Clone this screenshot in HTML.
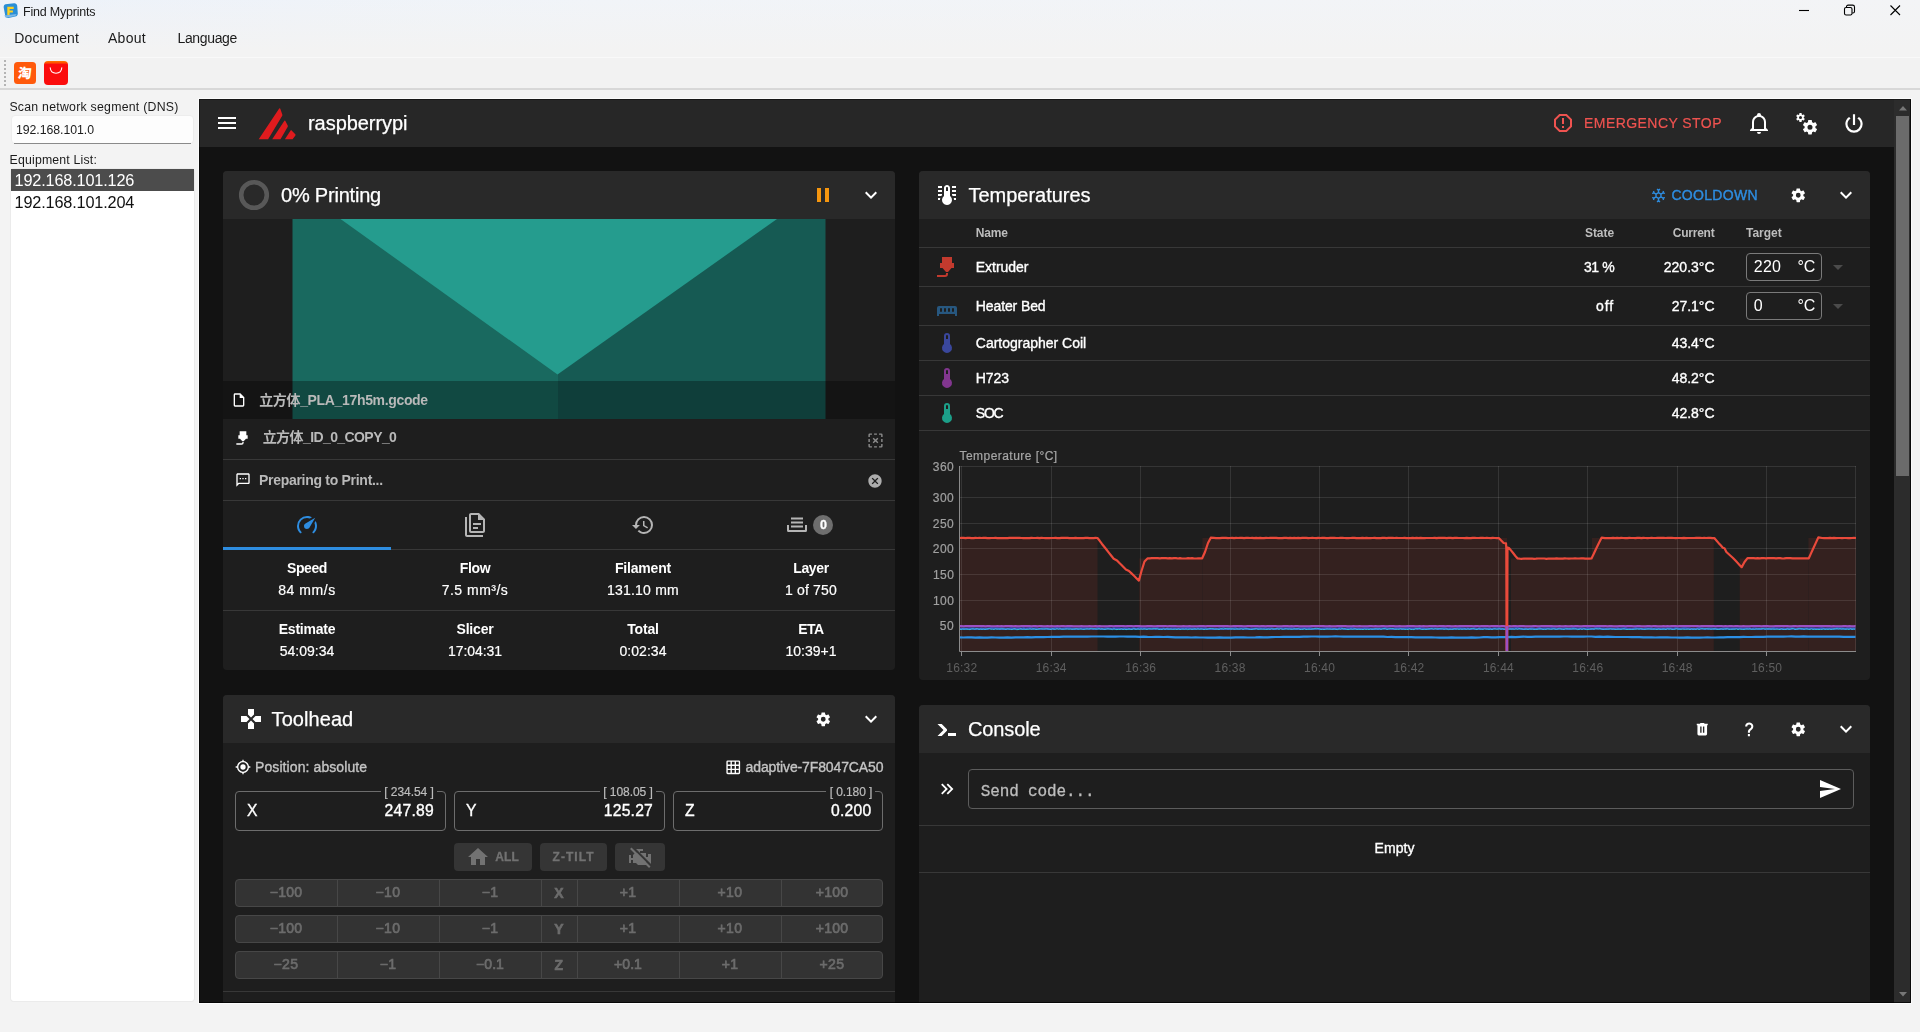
<!DOCTYPE html>
<html lang="en">
<head>
<meta charset="utf-8">
<title>Find Myprints</title>
<style>
*{box-sizing:border-box;margin:0;padding:0}
html,body{width:1920px;height:1032px;overflow:hidden;background:#f3f3f3}
body{position:relative;font-family:"Liberation Sans","Noto Sans CJK SC",sans-serif}
.a{position:absolute}
.t{position:absolute;white-space:pre}
svg{position:absolute;overflow:visible}
.titlebar{left:0;top:0;width:1920px;height:57px;background:linear-gradient(180deg,rgba(243,243,243,0) 0,#f3f3f3 50px),linear-gradient(90deg,#edf2f9 0,#f1f4f8 600px,#f3f4f6 1920px)}
.toolbar{left:0;top:57px;width:1920px;height:33px;background:#f2f2f2;border-top:1px solid #f9f9f9;border-bottom:2px solid #d8d8d8}
.app{left:199px;top:99px;width:1712px;height:904px;background:#121212;overflow:hidden;box-shadow:0 0 0 1px #fbfbfb}
.appbar{left:0;top:0;width:1695px;height:48px;background:#272727}
.panel{background:#1e1e1e;border-radius:4px;overflow:hidden}
.ph{left:0;top:0;width:100%;height:48px;background:#292929}
.hl{height:1px;background:#383838}
.btn{background:#353535;border-radius:4px}
.seg{background:#333;border:1px solid #474747;border-radius:4px;height:28px;left:12px;width:648px}
.seg i{position:absolute;top:0;width:1px;height:26px;background:#474747}
.box{border:1px solid #6d6d6d;border-radius:4px}
</style>
</head>
<body>
<!-- native window chrome -->
<div class="a titlebar"></div>
<div class="a toolbar"></div>
<svg style="left:3px;top:3px" width="15" height="16" viewBox="0 0 15 16"><path d="M2.5 1.2 11 .3c1.6-.2 3 .9 3.2 2.4l.6 7.8c.1 1.5-1 2.9-2.6 3.1l-6.800 1.300c-1.600.2-3-.9-3.200-2.400L.7 4.600C.6 3 1 1.400 2.500 1.200z" fill="#2a8fd6"/><path d="M1.300 12.500l1.500 2.300 9.500-1.800 1.400-2z" fill="#7db8e6"/><path d="M4.300 3.800h6.400v2.100H6.600v1.600h3.300v2H6.600v2.600H4.300z" fill="#ffd21e"/></svg>
<svg style="left:1798px;top:4px" width="104" height="12" viewBox="0 0 104 12" fill="none" stroke="#000" stroke-width="1.100"><path d="M1 6.500h10"/><rect x="46.500" y="3.500" width="7.500" height="7.500" rx="1.600"/><path d="M48.500 3.300v-.6c0-1 .7-1.600 1.600-1.600h4.500c1.200 0 1.900.8 1.900 1.900v4.400c0 .9-.6 1.600-1.600 1.600h-.7"/><path d="M92.500 1.500l9.500 9.500m0-9.500l-9.500 9.500"/></svg>
<div class="a" style="left:4px;top:60px;width:2px;height:27px;background:repeating-linear-gradient(180deg,#b4b4b4 0 2px,transparent 2px 4px)"></div>
<div class="a" style="left:14px;top:62px;width:22px;height:22px;border-radius:3.500px;background:#ff5a0c"></div>
<div class="t" style="left:18.200px;top:65.200px;font-size:13.500px;line-height:17px;color:#fff;font-weight:900;transform:skewX(-6deg)">淘</div>
<div class="a" style="left:44px;top:61px;width:24px;height:24px;border-radius:4px;background:linear-gradient(180deg,#ff7a00 0,#ff4a00 2px,#fb0c0c 3.500px)"></div>
<svg style="left:49px;top:67px" width="14" height="8" viewBox="0 0 14 8"><path d="M1.200.8c.3 3.300 2.700 5.400 5.800 5.400s5.500-2.100 5.800-5.400" fill="none" stroke="#fff" stroke-width="1.100" stroke-linecap="round"/></svg>
<!-- left pane -->
<div class="a" style="left:11px;top:115px;width:183px;height:28.500px;background:#fdfdfd;border-radius:4px;border:1px solid #ededed"></div>
<div class="a" style="left:13.500px;top:142.800px;width:177px;height:1.200px;background:#8a8a8a"></div>
<div class="a" style="left:11px;top:169px;width:183px;height:832px;background:#fff;border-radius:3px;box-shadow:0 0 0 1px #ebebeb"></div>
<div class="a" style="left:11px;top:169px;width:183px;height:22px;background:#4c4c4c"></div>

<!-- embedded dashboard -->
<div class="a app">
 <div class="a appbar"></div>
 <!-- scrollbar -->
 <div class="a" style="left:1695px;top:0;width:17px;height:904px;background:#2c2c2c"></div>
 <div class="a" style="left:1697px;top:17px;width:13px;height:360px;background:#6b6b6b"></div>
 <svg style="left:1699.500px;top:6.500px" width="8" height="4.500" viewBox="0 0 9 5"><path d="M0 5 4.500 0 9 5z" fill="#777"/></svg>
 <svg style="left:1699.500px;top:892.800px" width="8" height="4.500" viewBox="0 0 9 5"><path d="M0 0 4.500 5 9 0z" fill="#777"/></svg>
 <!-- appbar icons -->
 <svg style="left:16px;top:12px" width="24" height="24" viewBox="0 0 24 24" fill="#fff"><path d="M3,6H21V8H3V6M3,11H21V13H3V11M3,16H21V18H3V16Z"/></svg>
 <svg style="left:60px;top:9px" width="37" height="32" viewBox="0 0 37 32" fill="#df1b1e"><path d="M20.200.6q.6-1 1.100.2l2 5.600q.3.900-.2 1.700L9.100 31.200H-.3z"/><path d="M25.400 12.800q.5-.8 1 .1l2.300 4.500q.4.800-.1 1.600l-7.100 12.200h-8.300z"/><path d="M31.600 22.400q.5-.6 1 0l3.700 3.900q.5.600.1 1.200l-2.800 3.700h-7.700z"/></svg>
 <svg style="left:1352px;top:12px" width="24" height="24" viewBox="0 0 24 24" fill="#ef5350"><path d="M8.270,3L3,8.270V15.730L8.270,21H15.730C17.500,19.240 21,15.730 21,15.730V8.270L15.730,3M9.100,5H14.900L19,9.100V14.900L14.900,19H9.100L5,14.900V9.100M11,15H13V17H11V15M11,7H13V13H11V7"/></svg>
 <svg style="left:1548px;top:12px" width="24" height="24" viewBox="0 0 24 24" fill="#fff"><path d="M10,21H14A2,2 0 0,1 12,23A2,2 0 0,1 10,21M21,19V20H3V19L5,17V11C5,7.900 7.030,5.170 10,4.290C10,4.190 10,4.100 10,4A2,2 0 0,1 12,2A2,2 0 0,1 14,4C14,4.100 14,4.190 14,4.290C16.970,5.170 19,7.900 19,11V17L21,19M17,11A5,5 0 0,0 12,6A5,5 0 0,0 7,11V18H17V11Z"/></svg>
 <svg style="left:1596px;top:12px" width="24" height="24" viewBox="0 0 24 24" fill="#fff"><g transform="translate(6.360 7.560) scale(.72)"><path d="M12,15.500A3.500,3.500 0 0,1 8.500,12A3.500,3.500 0 0,1 12,8.500A3.500,3.500 0 0,1 15.500,12A3.500,3.500 0 0,1 12,15.500M19.430,12.970C19.470,12.650 19.500,12.330 19.500,12C19.500,11.670 19.470,11.340 19.430,11L21.540,9.370C21.730,9.220 21.780,8.950 21.660,8.730L19.660,5.270C19.540,5.050 19.270,4.960 19.050,5.050L16.560,6.050C16.040,5.660 15.500,5.320 14.870,5.070L14.500,2.420C14.460,2.180 14.250,2 14,2H10C9.750,2 9.540,2.180 9.500,2.420L9.130,5.070C8.500,5.320 7.960,5.660 7.440,6.050L4.950,5.050C4.730,4.960 4.460,5.050 4.340,5.270L2.340,8.730C2.210,8.950 2.270,9.220 2.460,9.370L4.570,11C4.530,11.340 4.500,11.670 4.500,12C4.500,12.330 4.530,12.650 4.570,12.970L2.460,14.630C2.270,14.780 2.210,15.050 2.340,15.270L4.340,18.730C4.460,18.950 4.730,19.030 4.950,18.950L7.440,17.940C7.960,18.340 8.500,18.680 9.130,18.930L9.500,21.580C9.540,21.820 9.750,22 10,22H14C14.250,22 14.460,21.820 14.500,21.580L14.870,18.930C15.500,18.670 16.040,18.340 16.560,17.940L19.050,18.950C19.270,19.030 19.540,18.950 19.660,18.730L21.660,15.270C21.780,15.050 21.730,14.780 21.540,14.630L19.430,12.970Z"/></g><g transform="translate(.220 1.220) scale(.44)"><path d="M12,15.500A3.500,3.500 0 0,1 8.500,12A3.500,3.500 0 0,1 12,8.500A3.500,3.500 0 0,1 15.500,12A3.500,3.500 0 0,1 12,15.500M19.430,12.970C19.470,12.650 19.500,12.330 19.500,12C19.500,11.670 19.470,11.340 19.430,11L21.540,9.370C21.730,9.220 21.780,8.950 21.660,8.730L19.660,5.270C19.540,5.050 19.270,4.960 19.050,5.050L16.560,6.050C16.040,5.660 15.500,5.320 14.870,5.070L14.500,2.420C14.460,2.180 14.250,2 14,2H10C9.750,2 9.540,2.180 9.500,2.420L9.130,5.070C8.500,5.320 7.960,5.660 7.440,6.050L4.950,5.050C4.730,4.960 4.460,5.050 4.340,5.270L2.340,8.730C2.210,8.950 2.270,9.220 2.460,9.370L4.570,11C4.530,11.340 4.500,11.670 4.500,12C4.500,12.330 4.530,12.650 4.570,12.970L2.460,14.630C2.270,14.780 2.210,15.050 2.340,15.270L4.340,18.730C4.460,18.950 4.730,19.030 4.950,18.950L7.440,17.940C7.960,18.340 8.500,18.680 9.130,18.930L9.500,21.580C9.540,21.820 9.750,22 10,22H14C14.250,22 14.460,21.820 14.500,21.580L14.870,18.930C15.500,18.670 16.040,18.340 16.560,17.940L19.050,18.950C19.270,19.030 19.540,18.950 19.660,18.730L21.660,15.270C21.780,15.050 21.730,14.780 21.540,14.630L19.430,12.970Z"/></g></svg>
 <svg style="left:1642px;top:11.500px" width="26" height="26" viewBox="0 0 24 24" fill="#fff"><path d="M16.560,5.440L15.110,6.890C16.840,7.940 18,9.830 18,12A6,6 0 0,1 12,18A6,6 0 0,1 6,12C6,9.830 7.160,7.940 8.880,6.880L7.440,5.440C5.360,6.880 4,9.280 4,12A8,8 0 0,0 12,20A8,8 0 0,0 20,12C20,9.280 18.640,6.880 16.560,5.440M13,3H11V13H13"/></svg>

 <!-- STATUS PANEL -->
 <div class="a panel" style="left:24px;top:72px;width:672px;height:499px">
  <div class="a ph"></div>
  <svg style="left:15px;top:8px" width="32" height="32" viewBox="0 0 32 32"><circle cx="16" cy="16" r="12.800" fill="none" stroke="#585858" stroke-width="4.600"/></svg>
  <svg style="left:588px;top:12px" width="24" height="24" viewBox="0 0 24 24" fill="#f5960f"><path d="M14,19H18V5H14M6,19H10V5H6V19Z"/></svg>
  <svg style="left:636px;top:12px" width="24" height="24" viewBox="0 0 24 24" fill="#fff"><path d="M7.410,8.580L12,13.170L16.590,8.580L18,10L12,16L6,10L7.410,8.580Z"/></svg>
  <!-- thumbnail -->
  <svg style="left:68px;top:48px;filter:blur(.6px)" width="536" height="200" viewBox="0 0 536 200"><rect x="1.500" width="267" height="200" fill="#19695f"/><rect x="267" width="267.500" height="200" fill="#165a53"/><path d="M49.500 0H486L266.500 155.500z" fill="#259c8e"/></svg>
  <div class="a" style="left:0;top:210px;width:672px;height:38px;background:rgba(0,0,0,.3)"></div>
  <svg style="left:8px;top:221px" width="16" height="16" viewBox="0 0 24 24" fill="#fff"><path d="M14,2H6A2,2 0 0,0 4,4V20A2,2 0 0,0 6,22H18A2,2 0 0,0 20,20V8L14,2M18,20H6V4H13V9H18V20Z"/></svg>
  <svg style="left:12px;top:259px" width="16" height="16" viewBox="0 0 24 24" fill="#fff"><path d="M7,2H17V8H19V13H16.500L13,17H11L7.500,13H5V8H7V2M10,22H2V20H10A1,1 0 0,0 11,19V18H13V19A3,3 0 0,1 10,22Z"/></svg>
  <svg style="left:643.500px;top:260.500px" width="17" height="17" viewBox="0 0 24 24" fill="#8c8c8c"><path d="M20,20V17H22V20A2,2 0 0,1 20,22H17V20H20M2,20V17H4V20H7V22H4A2,2 0 0,1 2,20M10,20H14V22H10V20M14.590,8L12,10.590L9.410,8L8,9.410L10.590,12L8,14.590L9.410,16L12,13.410L14.590,16L16,14.590L13.410,12L16,9.410L14.590,8M20,10H22V14H20V10M2,10H4V14H2V10M2,4A2,2 0 0,1 4,2H7V4H4V7H2V4M22,4V7H20V4H17V2H20A2,2 0 0,1 22,4M10,2H14V4H10V2Z"/></svg>
  <div class="a hl" style="left:0;top:288px;width:672px"></div>
  <svg style="left:12px;top:301px" width="16" height="16" viewBox="0 0 24 24" fill="#fff"><path d="M20 2H4C2.900 2 2 2.900 2 4V22L6 18H20C21.100 18 22 17.100 22 16V4C22 2.900 21.100 2 20 2M20 16H5.200L4 17.200V4H20V16M17 11H15V9H17M13 11H11V9H13M9 11H7V9H9Z"/></svg>
  <svg style="left:643.800px;top:302.200px" width="16" height="16" viewBox="0 0 24 24" fill="#adadad"><path d="M12,2C17.530,2 22,6.470 22,12C22,17.530 17.530,22 12,22C6.470,22 2,17.530 2,12C2,6.470 6.470,2 12,2M15.590,7L12,10.590L8.410,7L7,8.410L10.590,12L7,15.590L8.410,17L12,13.410L15.590,17L17,15.590L13.410,12L17,8.410L15.590,7Z"/></svg>
  <div class="a hl" style="left:0;top:329px;width:672px"></div>
  <!-- tabs -->
  <svg style="left:72px;top:342px" width="24" height="24" viewBox="0 0 24 24" fill="#2e8de0"><path d="M12,16A3,3 0 0,1 9,13C9,11.880 9.610,10.900 10.500,10.390L20.210,4.770L14.680,14.350C14.180,15.330 13.170,16 12,16M12,3C13.810,3 15.500,3.500 16.970,4.320L14.870,5.530C14,5.190 13,5 12,5A8,8 0 0,0 4,13C4,15.210 4.890,17.210 6.340,18.650H6.350C6.740,19.040 6.740,19.670 6.350,20.060C5.960,20.450 5.320,20.450 4.930,20.070V20.070C3.120,18.260 2,15.760 2,13A10,10 0 0,1 12,3M22,13C22,15.760 20.880,18.260 19.070,20.070V20.070C18.680,20.450 18.050,20.450 17.660,20.060C17.270,19.670 17.270,19.040 17.660,18.650V18.650C19.110,17.200 20,15.210 20,13C20,12 19.810,11 19.460,10.100L20.670,8C21.500,9.500 22,11.180 22,13Z"/></svg>
  <svg style="left:240px;top:342px" width="24" height="24" viewBox="0 0 24 24" fill="#b5b5b5"><path d="M16 0H8C6.900 0 6 .9 6 2V18C6 19.100 6.900 20 8 20H20C21.100 20 22 19.100 22 18V6L16 0M20 18H8V2H15V7H20V18M4 4V22H20V24H4C2.900 24 2 23.100 2 22V4H4M10 10V12H18V10H10M10 14V16H15V14H10Z"/></svg>
  <svg style="left:408px;top:342px" width="24" height="24" viewBox="0 0 24 24" fill="#b5b5b5"><path d="M13.500,8H12V13L16.280,15.540L17,14.330L13.500,12.250V8M13,3A9,9 0 0,0 4,12H1L4.960,16.030L9,12H6A7,7 0 0,1 13,5A7,7 0 0,1 20,12A7,7 0 0,1 13,19C11.070,19 9.320,18.210 8.060,16.940L6.640,18.360C8.270,20 10.500,21 13,21A9,9 0 0,0 22,12A9,9 0 0,0 13,3"/></svg>
  <svg style="left:562px;top:342px" width="24" height="24" viewBox="0 0 24 24" fill="#b5b5b5"><path d="M6,4.500H18V6.500H6M6,8.500H18V10.500H6M6,12.500H18V14.500H6M2,12H4V16.500Q4,17 4.500,17H19.500Q20,17 20,16.500V12H22V17.500Q22,19 20.500,19H3.500Q2,19 2,17.500Z"/></svg>
  <div class="a" style="left:589.800px;top:343.900px;width:20px;height:20px;border-radius:10px;background:#6e6e6e"></div>
  <div class="a hl" style="left:0;top:378px;width:672px"></div>
  <div class="a" style="left:0;top:376px;width:168px;height:2.500px;background:#2e8de0"></div>
  <div class="a hl" style="left:0;top:439px;width:672px"></div>
 </div>

 <!-- TOOLHEAD PANEL -->
 <div class="a panel" style="left:24px;top:596px;width:672px;height:340px;border-radius:4px 4px 0 0">
  <div class="a ph"></div>
  <svg style="left:16px;top:12px" width="24" height="24" viewBox="0 0 24 24" fill="#fff"><path d="M16.500,9L13.500,12L16.500,15H22V9M9,16.500V22H15V16.500L12,13.500M7.500,9H2V15H7.500L10.500,12M15,7.500V2H9V7.500L12,10.500L15,7.500Z"/></svg>
  <svg style="left:592px;top:16px" width="16.500" height="16.500" viewBox="0 0 24 24" fill="#fff"><path d="M12,15.500A3.500,3.500 0 0,1 8.500,12A3.500,3.500 0 0,1 12,8.500A3.500,3.500 0 0,1 15.500,12A3.500,3.500 0 0,1 12,15.500M19.430,12.970C19.470,12.650 19.500,12.330 19.500,12C19.500,11.670 19.470,11.340 19.430,11L21.540,9.370C21.730,9.220 21.780,8.950 21.660,8.730L19.660,5.270C19.540,5.050 19.270,4.960 19.050,5.050L16.560,6.050C16.040,5.660 15.500,5.320 14.870,5.070L14.500,2.420C14.460,2.180 14.250,2 14,2H10C9.750,2 9.540,2.180 9.500,2.420L9.130,5.070C8.500,5.320 7.960,5.660 7.440,6.050L4.950,5.050C4.730,4.960 4.460,5.050 4.340,5.270L2.340,8.730C2.210,8.950 2.270,9.220 2.460,9.370L4.570,11C4.530,11.340 4.500,11.670 4.500,12C4.500,12.330 4.530,12.650 4.570,12.970L2.460,14.630C2.270,14.780 2.210,15.050 2.340,15.270L4.340,18.730C4.460,18.950 4.730,19.030 4.950,18.950L7.440,17.940C7.960,18.340 8.500,18.680 9.130,18.930L9.500,21.580C9.540,21.820 9.750,22 10,22H14C14.250,22 14.460,21.820 14.500,21.580L14.870,18.930C15.500,18.670 16.040,18.340 16.560,17.940L19.050,18.950C19.270,19.030 19.540,18.950 19.660,18.730L21.660,15.270C21.780,15.050 21.730,14.780 21.540,14.630L19.430,12.970Z"/></svg>
  <svg style="left:636px;top:12px" width="24" height="24" viewBox="0 0 24 24" fill="#fff"><path d="M7.410,8.580L12,13.170L16.590,8.580L18,10L12,16L6,10L7.410,8.580Z"/></svg>
  <svg style="left:12px;top:64px" width="16" height="16" viewBox="0 0 24 24" fill="#fff"><path d="M12,8A4,4 0 0,1 16,12A4,4 0 0,1 12,16A4,4 0 0,1 8,12A4,4 0 0,1 12,8M3.050,13H1V11H3.050C3.500,6.830 6.830,3.500 11,3.050V1H13V3.050C17.170,3.500 20.500,6.830 20.950,11H23V13H20.950C20.500,17.170 17.170,20.500 13,20.950V23H11V20.950C6.830,20.500 3.500,17.170 3.050,13M12,5A7,7 0 0,0 5,12A7,7 0 0,0 12,19A7,7 0 0,0 19,12A7,7 0 0,0 12,5Z"/></svg>
  <svg style="left:502px;top:63.500px" width="16.500" height="16.500" viewBox="0 0 24 24" fill="#fff"><path d="M10,4V8H14V4H10M16,4V8H20V4H16M16,10V14H20V10H16M16,16V20H20V16H16M14,20V16H10V20H14M8,20V16H4V20H8M8,14V10H4V14H8M8,8V4H4V8H8M10,14H14V10H10V14M4,2H20A2,2 0 0,1 22,4V20A2,2 0 0,1 20,22H4C2.920,22 2,21.100 2,20V4A2,2 0 0,1 4,2Z"/></svg>
  <!-- position boxes -->
  <div class="a box" style="left:12px;top:96px;width:211px;height:40px"></div>
  <div class="a" style="left:158px;top:95px;width:56px;height:3px;background:#1e1e1e"></div>
  <div class="a box" style="left:231px;top:96px;width:211px;height:40px"></div>
  <div class="a" style="left:377px;top:95px;width:56px;height:3px;background:#1e1e1e"></div>
  <div class="a box" style="left:450px;top:96px;width:210px;height:40px"></div>
  <div class="a" style="left:603px;top:95px;width:49px;height:3px;background:#1e1e1e"></div>
  <!-- home buttons -->
  <div class="a btn" style="left:231px;top:148px;width:78px;height:28px"></div>
  <svg style="left:242.800px;top:150.200px" width="24" height="24" viewBox="0 0 24 24" fill="#727272"><path d="M10,20V14H14V20H19V12H22L12,3L2,12H5V20H10Z"/></svg>
  <div class="a btn" style="left:317px;top:148px;width:67px;height:28px"></div>
  <div class="a btn" style="left:392px;top:148px;width:50px;height:28px"></div>
  <svg style="left:405px;top:150px" width="24" height="24" viewBox="0 0 24 24" fill="#727272"><path d="M7,4V6H10V8H7L5,10V13H3V10H1V18H3V15H5V18H8L10,20H18V16H20V19H23V9H20V12H18V8H12V6H15V4H7Z"/><path d="M4.300 1.700 23.300 20.700" stroke="#353535" stroke-width="2.200" fill="none"/><path d="M2.800 3.200 21.800 22.200" stroke="#727272" stroke-width="2" fill="none"/></svg>
  <!-- move buttons -->
  <div class="a seg" style="top:184px"><i style="left:101px"></i><i style="left:203px"></i><i style="left:305px"></i><i style="left:341px"></i><i style="left:443px"></i><i style="left:545px"></i></div>
  <div class="a seg" style="top:220px"><i style="left:101px"></i><i style="left:203px"></i><i style="left:305px"></i><i style="left:341px"></i><i style="left:443px"></i><i style="left:545px"></i></div>
  <div class="a seg" style="top:256px"><i style="left:101px"></i><i style="left:203px"></i><i style="left:305px"></i><i style="left:341px"></i><i style="left:443px"></i><i style="left:545px"></i></div>
  <div class="a hl" style="left:0;top:296px;width:672px"></div>
 </div>

 <!-- TEMPERATURES PANEL -->
 <div class="a panel" style="left:720px;top:72px;width:951px;height:509px">
  <div class="a ph"></div>
  <svg style="left:16px;top:12px" width="24" height="24" viewBox="0 0 24 24" fill="#fff"><path d="M17 3H21V5H17V3M17 7H21V9H17V7M17 11H21V13H17.750L17 12.100V11M21 15V17H19C19 16.310 18.900 15.630 18.710 15H21M7 3V5H3V3H7M7 7V9H3V7H7M7 11V12.100L6.250 13H3V11H7M3 15H5.290C5.100 15.630 5 16.310 5 17H3V15M15 13V5C15 3.340 13.660 2 12 2S9 3.340 9 5V13C6.790 14.660 6.340 17.790 8 20S12.790 22.660 15 21 17.660 16.210 16 14C15.720 13.620 15.380 13.280 15 13M12 4C12.550 4 13 4.450 13 5V8H11V5C11 4.450 11.450 4 12 4Z"/></svg>
  <svg style="left:730.500px;top:15.500px" width="17" height="17" viewBox="0 0 24 24" fill="#2e8de0"><path d="M20.790,13.950L18.460,14.570L16.460,13.440V10.560L18.460,9.430L20.790,10.050L21.310,8.120L19.540,7.650L20,5.880L18.070,5.360L17.450,7.690L15.450,8.820L13,7.380V5.120L14.710,3.410L13.290,2L12,3.290L10.710,2L9.290,3.410L11,5.120V7.380L8.500,8.820L6.500,7.690L5.920,5.360L4,5.880L4.470,7.650L2.700,8.120L3.220,10.050L5.550,9.430L7.550,10.560V13.450L5.550,14.580L3.220,13.960L2.700,15.890L4.470,16.360L4,18.120L5.930,18.640L6.550,16.310L8.550,15.180L11,16.620V18.880L9.290,20.590L10.710,22L12,20.710L13.290,22L14.700,20.590L13,18.880V16.620L15.500,15.170L17.500,16.300L18.120,18.630L20,18.120L19.530,16.350L21.300,15.880L20.790,13.950M9.500,10.560L12,9.110L14.500,10.560V13.440L12,14.890L9.500,13.440V10.560Z"/></svg>
  <svg style="left:870.700px;top:15.800px" width="16.500" height="16.500" viewBox="0 0 24 24" fill="#fff"><path d="M12,15.500A3.500,3.500 0 0,1 8.500,12A3.500,3.500 0 0,1 12,8.500A3.500,3.500 0 0,1 15.500,12A3.500,3.500 0 0,1 12,15.500M19.430,12.970C19.470,12.650 19.500,12.330 19.500,12C19.500,11.670 19.470,11.340 19.430,11L21.540,9.370C21.730,9.220 21.780,8.950 21.660,8.730L19.660,5.270C19.540,5.050 19.270,4.960 19.050,5.050L16.560,6.050C16.040,5.660 15.500,5.320 14.870,5.070L14.500,2.420C14.460,2.180 14.250,2 14,2H10C9.750,2 9.540,2.180 9.500,2.420L9.130,5.070C8.500,5.320 7.960,5.660 7.440,6.050L4.950,5.050C4.730,4.960 4.460,5.050 4.340,5.270L2.340,8.730C2.210,8.950 2.270,9.220 2.460,9.370L4.570,11C4.530,11.340 4.500,11.670 4.500,12C4.500,12.330 4.530,12.650 4.570,12.970L2.460,14.630C2.270,14.780 2.210,15.050 2.340,15.270L4.340,18.730C4.460,18.950 4.730,19.030 4.950,18.950L7.440,17.940C7.960,18.340 8.500,18.680 9.130,18.930L9.500,21.580C9.540,21.820 9.750,22 10,22H14C14.250,22 14.460,21.820 14.500,21.580L14.870,18.930C15.500,18.670 16.040,18.340 16.560,17.940L19.050,18.950C19.270,19.030 19.540,18.950 19.660,18.730L21.660,15.270C21.780,15.050 21.730,14.780 21.540,14.630L19.430,12.970Z"/></svg>
  <svg style="left:915px;top:12px" width="24" height="24" viewBox="0 0 24 24" fill="#fff"><path d="M7.410,8.580L12,13.170L16.590,8.580L18,10L12,16L6,10L7.410,8.580Z"/></svg>
  <div class="a hl" style="left:0;top:76px;width:951px"></div>
  <div class="a hl" style="left:0;top:115px;width:951px"></div>
  <div class="a hl" style="left:0;top:154px;width:951px"></div>
  <div class="a hl" style="left:0;top:189px;width:951px"></div>
  <div class="a hl" style="left:0;top:224px;width:951px"></div>
  <div class="a hl" style="left:0;top:259px;width:951px"></div>
  <!-- sensor icons -->
  <svg style="left:16px;top:84px" width="24" height="24" viewBox="0 0 24 24" fill="#c23a2e"><path d="M7,2H17V8H19V13H16.500L13,17H11L7.500,13H5V8H7V2M10,22H2V20H10A1,1 0 0,0 11,19V18H13V19A3,3 0 0,1 10,22Z"/></svg>
  <svg style="left:16px;top:123px" width="24" height="24" viewBox="0 0 24 24" fill="#27577f"><path d="M2,22V14A2,2 0 0,1 4,12H20A2,2 0 0,1 22,14V22H20V20H4V22H2M6,14A1,1 0 0,0 5,15V17A1,1 0 0,0 6,18A1,1 0 0,0 7,17V15A1,1 0 0,0 6,14M10,14A1,1 0 0,0 9,15V17A1,1 0 0,0 10,18A1,1 0 0,0 11,17V15A1,1 0 0,0 10,14M14,14A1,1 0 0,0 13,15V17A1,1 0 0,0 14,18A1,1 0 0,0 15,17V15A1,1 0 0,0 14,14M18,14A1,1 0 0,0 17,15V17A1,1 0 0,0 18,18A1,1 0 0,0 19,17V15A1,1 0 0,0 18,14Z"/></svg>
  <svg style="left:16px;top:160px" width="24" height="24" viewBox="0 0 24 24" fill="#3a479c"><path d="M15 13V5A3 3 0 0 0 9 5V13A5 5 0 1 0 15 13M12 4A1 1 0 0 1 13 5V8H11V5A1 1 0 0 1 12 4Z"/></svg>
  <svg style="left:16px;top:195px" width="24" height="24" viewBox="0 0 24 24" fill="#82368f"><path d="M15 13V5A3 3 0 0 0 9 5V13A5 5 0 1 0 15 13M12 4A1 1 0 0 1 13 5V8H11V5A1 1 0 0 1 12 4Z"/></svg>
  <svg style="left:16px;top:230px" width="24" height="24" viewBox="0 0 24 24" fill="#1c9f89"><path d="M15 13V5A3 3 0 0 0 9 5V13A5 5 0 1 0 15 13M12 4A1 1 0 0 1 13 5V8H11V5A1 1 0 0 1 12 4Z"/></svg>
  <!-- target inputs -->
  <div class="a box" style="left:827px;top:82.200px;width:76px;height:27.600px;border-color:#7a7a7a"></div>
  <div class="a box" style="left:827px;top:121.200px;width:76px;height:27.600px;border-color:#7a7a7a"></div>
  <svg style="left:914px;top:94px" width="10" height="5" viewBox="0 0 10 5"><path d="M0 0h10L5 5z" fill="#4b4b4b"/></svg>
  <svg style="left:914px;top:133px" width="10" height="5" viewBox="0 0 10 5"><path d="M0 0h10L5 5z" fill="#4b4b4b"/></svg>
  <svg style="left:0;top:0" width="951" height="509" viewBox="0 0 951 509">
<rect x="40.5" y="366.9" width="138.0" height="113.1" fill="#34211f"/>
<rect x="220.2" y="387.5" width="63.3" height="92.5" fill="#34211f"/>
<rect x="283.5" y="366.9" width="304.5" height="113.1" fill="#34211f"/>
<rect x="592.0" y="387.5" width="81.0" height="92.5" fill="#34211f"/>
<rect x="673.0" y="366.9" width="121.8" height="113.1" fill="#34211f"/>
<rect x="820.7" y="387.5" width="68.8" height="92.5" fill="#34211f"/>
<rect x="889.5" y="366.9" width="47.5" height="113.1" fill="#34211f"/>
<path d="M40.5,295.5 H937.0 M40.5,326.5 H937.0 M40.5,352.5 H937.0 M40.5,377.5 H937.0 M40.5,403.5 H937.0 M40.5,429.5 H937.0 M40.5,454.5 H937.0 M42.5,295.0 V480.0 M132.5,295.0 V480.0 M221.5,295.0 V480.0 M311.5,295.0 V480.0 M400.5,295.0 V480.0 M489.5,295.0 V480.0 M579.5,295.0 V480.0 M668.5,295.0 V480.0 M758.5,295.0 V480.0 M847.5,295.0 V480.0 M936.5,295.0 V480.0" stroke="#ffffff" stroke-opacity=".105" stroke-width="1" fill="none"/>
<path d="M40.5,455.2 L42.5,455.1 L44.5,455.3 L46.5,455.1 L48.5,455.2 L50.5,455.2 L52.5,455.1 L54.5,455.2 L56.5,455.1 L58.5,455.2 L60.5,455.1 L62.5,455.1 L64.5,455.2 L66.5,455.3 L68.5,455.1 L70.5,455.1 L72.5,455.3 L74.5,455.4 L76.5,455.3 L78.5,455.2 L80.5,455.4 L82.5,455.1 L84.5,455.3 L86.5,455.2 L88.5,455.1 L90.5,455.1 L92.5,455.2 L94.5,455.3 L96.5,455.1 L98.5,455.3 L100.5,455.3 L102.5,455.2 L104.5,455.2 L106.5,455.1 L108.5,455.1 L110.5,455.1 L112.5,455.3 L114.5,455.2 L116.5,455.2 L118.5,455.3 L120.5,455.2 L122.5,455.2 L124.5,455.3 L126.5,455.3 L128.5,455.2 L130.5,455.3 L132.5,455.2 L134.5,455.3 L136.5,455.3 L138.5,455.2 L140.5,455.4 L142.5,455.1 L144.5,455.2 L146.5,455.3 L148.5,455.1 L150.5,455.2 L152.5,455.1 L154.5,455.3 L156.5,455.3 L158.5,455.3 L160.5,455.3 L162.5,455.2 L164.5,455.3 L166.5,455.3 L168.5,455.3 L170.5,455.2 L172.5,455.3 L174.5,455.4 L176.5,455.2 L178.5,455.3 L180.5,455.1 L182.5,455.3 L184.5,455.3 L186.5,455.4 L188.5,455.3 L190.5,455.2 L192.5,455.2 L194.5,455.3 L196.5,455.1 L198.5,455.2 L200.5,455.1 L202.5,455.1 L204.5,455.1 L206.5,455.3 L208.5,455.1 L210.5,455.2 L212.5,455.2 L214.5,455.3 L216.5,455.1 L218.5,455.2 L220.5,455.2 L222.5,455.3 L224.5,455.3 L226.5,455.3 L228.5,455.2 L230.5,455.2 L232.5,455.2 L234.5,455.3 L236.5,455.4 L238.5,455.1 L240.5,455.1 L242.5,455.2 L244.5,455.2 L246.5,455.2 L248.5,455.3 L250.5,455.2 L252.5,455.1 L254.5,455.2 L256.5,455.2 L258.5,455.3 L260.5,455.4 L262.5,455.3 L264.5,455.2 L266.5,455.3 L268.5,455.3 L270.5,455.1 L272.5,455.4 L274.5,455.3 L276.5,455.3 L278.5,455.3 L280.5,455.2 L282.5,455.2 L284.5,455.1 L286.5,455.3 L288.5,455.1 L290.5,455.1 L292.5,455.1 L294.5,455.1 L296.5,455.2 L298.5,455.1 L300.5,455.1 L302.5,455.1 L304.5,455.1 L306.5,455.2 L308.5,455.1 L310.5,455.3 L312.5,455.3 L314.5,455.1 L316.5,455.2 L318.5,455.2 L320.5,455.2 L322.5,455.1 L324.5,455.3 L326.5,455.4 L328.5,455.2 L330.5,455.2 L332.5,455.1 L334.5,455.1 L336.5,455.2 L338.5,455.2 L340.5,455.3 L342.5,455.1 L344.5,455.1 L346.5,455.4 L348.5,455.2 L350.5,455.1 L352.5,455.2 L354.5,455.1 L356.5,455.2 L358.5,455.4 L360.5,455.3 L362.5,455.3 L364.5,455.2 L366.5,455.2 L368.5,455.1 L370.5,455.3 L372.5,455.2 L374.5,455.3 L376.5,455.2 L378.5,455.1 L380.5,455.3 L382.5,455.4 L384.5,455.3 L386.5,455.3 L388.5,455.3 L390.5,455.3 L392.5,455.1 L394.5,455.2 L396.5,455.2 L398.5,455.1 L400.5,455.1 L402.5,455.2 L404.5,455.2 L406.5,455.3 L408.5,455.4 L410.5,455.2 L412.5,455.4 L414.5,455.4 L416.5,455.4 L418.5,455.2 L420.5,455.1 L422.5,455.1 L424.5,455.1 L426.5,455.1 L428.5,455.3 L430.5,455.4 L432.5,455.3 L434.5,455.2 L436.5,455.3 L438.5,455.3 L440.5,455.1 L442.5,455.3 L444.5,455.4 L446.5,455.3 L448.5,455.3 L450.5,455.2 L452.5,455.1 L454.5,455.3 L456.5,455.2 L458.5,455.3 L460.5,455.4 L462.5,455.2 L464.5,455.2 L466.5,455.4 L468.5,455.3 L470.5,455.1 L472.5,455.1 L474.5,455.1 L476.5,455.4 L478.5,455.3 L480.5,455.1 L482.5,455.3 L484.5,455.4 L486.5,455.3 L488.5,455.2 L490.5,455.2 L492.5,455.1 L494.5,455.1 L496.5,455.4 L498.5,455.3 L500.5,455.2 L502.5,455.4 L504.5,455.2 L506.5,455.3 L508.5,455.3 L510.5,455.1 L512.5,455.2 L514.5,455.2 L516.5,455.2 L518.5,455.3 L520.5,455.2 L522.5,455.2 L524.5,455.1 L526.5,455.4 L528.5,455.2 L530.5,455.2 L532.5,455.3 L534.5,455.4 L536.5,455.2 L538.5,455.4 L540.5,455.2 L542.5,455.2 L544.5,455.2 L546.5,455.1 L548.5,455.2 L550.5,455.1 L552.5,455.1 L554.5,455.3 L556.5,455.1 L558.5,455.2 L560.5,455.3 L562.5,455.2 L564.5,455.2 L566.5,455.2 L568.5,455.2 L570.5,455.3 L572.5,455.1 L574.5,455.2 L576.5,455.2 L578.5,455.2 L580.5,455.3 L582.5,455.2 L584.5,455.2 L586.5,455.3 L588.5,455.4 L590.5,455.2 L592.5,455.3 L594.5,455.2 L596.5,455.2 L598.5,455.3 L600.5,455.2 L602.5,455.2 L604.5,455.2 L606.5,455.4 L608.5,455.3 L610.5,455.3 L612.5,455.4 L614.5,455.2 L616.5,455.2 L618.5,455.4 L620.5,455.3 L622.5,455.1 L624.5,455.1 L626.5,455.2 L628.5,455.1 L630.5,455.2 L632.5,455.1 L634.5,455.3 L636.5,455.3 L638.5,455.3 L640.5,455.1 L642.5,455.3 L644.5,455.3 L646.5,455.1 L648.5,455.3 L650.5,455.4 L652.5,455.1 L654.5,455.4 L656.5,455.2 L658.5,455.2 L660.5,455.4 L662.5,455.3 L664.5,455.1 L666.5,455.2 L668.5,455.2 L670.5,455.2 L672.5,455.1 L674.5,455.2 L676.5,455.3 L678.5,455.1 L680.5,455.2 L682.5,455.2 L684.5,455.1 L686.5,455.2 L688.5,455.3 L690.5,455.2 L692.5,455.1 L694.5,455.4 L696.5,455.3 L698.5,455.4 L700.5,455.1 L702.5,455.2 L704.5,455.1 L706.5,455.3 L708.5,455.2 L710.5,455.1 L712.5,455.2 L714.5,455.4 L716.5,455.3 L718.5,455.2 L720.5,455.1 L722.5,455.4 L724.5,455.3 L726.5,455.3 L728.5,455.1 L730.5,455.1 L732.5,455.3 L734.5,455.2 L736.5,455.1 L738.5,455.4 L740.5,455.3 L742.5,455.3 L744.5,455.1 L746.5,455.3 L748.5,455.1 L750.5,455.3 L752.5,455.2 L754.5,455.2 L756.5,455.2 L758.5,455.4 L760.5,455.2 L762.5,455.1 L764.5,455.2 L766.5,455.2 L768.5,455.1 L770.5,455.1 L772.5,455.1 L774.5,455.1 L776.5,455.2 L778.5,455.2 L780.5,455.3 L782.5,455.2 L784.5,455.2 L786.5,455.1 L788.5,455.2 L790.5,455.1 L792.5,455.2 L794.5,455.1 L796.5,455.3 L798.5,455.2 L800.5,455.1 L802.5,455.2 L804.5,455.4 L806.5,455.1 L808.5,455.3 L810.5,455.2 L812.5,455.2 L814.5,455.3 L816.5,455.2 L818.5,455.2 L820.5,455.3 L822.5,455.4 L824.5,455.2 L826.5,455.3 L828.5,455.3 L830.5,455.3 L832.5,455.2 L834.5,455.2 L836.5,455.1 L838.5,455.1 L840.5,455.1 L842.5,455.3 L844.5,455.2 L846.5,455.1 L848.5,455.1 L850.5,455.3 L852.5,455.3 L854.5,455.3 L856.5,455.2 L858.5,455.2 L860.5,455.2 L862.5,455.2 L864.5,455.1 L866.5,455.2 L868.5,455.2 L870.5,455.4 L872.5,455.4 L874.5,455.2 L876.5,455.2 L878.5,455.4 L880.5,455.2 L882.5,455.2 L884.5,455.1 L886.5,455.2 L888.5,455.2 L890.5,455.2 L892.5,455.1 L894.5,455.2 L896.5,455.1 L898.5,455.2 L900.5,455.1 L902.5,455.2 L904.5,455.1 L906.5,455.1 L908.5,455.2 L910.5,455.2 L912.5,455.3 L914.5,455.2 L916.5,455.3 L918.5,455.3 L920.5,455.3 L922.5,455.3 L924.5,455.2 L926.5,455.2 L928.5,455.4 L930.5,455.1 L932.5,455.3 L934.5,455.3 L936.5,455.1" stroke="#9b4fc4" stroke-width="2.2" fill="none" stroke-linejoin="round" />
<path d="M40.5,457.9 L42.5,457.9 L44.5,457.8 L46.5,457.8 L48.5,457.9 L50.5,457.5 L52.5,457.7 L54.5,457.7 L56.5,457.9 L58.5,457.9 L60.5,457.9 L62.5,457.7 L64.5,457.9 L66.5,457.8 L68.5,457.8 L70.5,457.5 L72.5,457.4 L74.5,457.5 L76.5,457.6 L78.5,457.5 L80.5,457.9 L82.5,457.7 L84.5,457.8 L86.5,457.8 L88.5,457.8 L90.5,457.7 L92.5,457.4 L94.5,457.9 L96.5,457.8 L98.5,457.7 L100.5,457.7 L102.5,457.8 L104.5,457.4 L106.5,457.8 L108.5,457.5 L110.5,457.4 L112.5,457.6 L114.5,457.8 L116.5,457.5 L118.5,457.8 L120.5,458.0 L122.5,457.7 L124.5,457.6 L126.5,457.7 L128.5,457.8 L130.5,457.9 L132.5,457.8 L134.5,457.8 L136.5,457.4 L138.5,457.5 L140.5,457.5 L142.5,457.8 L144.5,457.6 L146.5,457.7 L148.5,457.4 L150.5,457.4 L152.5,457.6 L154.5,457.8 L156.5,457.8 L158.5,457.8 L160.5,457.6 L162.5,457.7 L164.5,457.7 L166.5,457.7 L168.5,457.5 L170.5,457.9 L172.5,457.5 L174.5,458.0 L176.5,458.0 L178.5,457.4 L180.5,457.7 L182.5,457.9 L184.5,458.0 L186.5,457.7 L188.5,457.6 L190.5,457.5 L192.5,458.0 L194.5,457.5 L196.5,457.7 L198.5,457.5 L200.5,457.7 L202.5,458.0 L204.5,457.5 L206.5,457.9 L208.5,457.7 L210.5,457.9 L212.5,457.8 L214.5,457.5 L216.5,457.9 L218.5,457.7 L220.5,457.4 L222.5,457.4 L224.5,457.7 L226.5,457.7 L228.5,457.6 L230.5,457.5 L232.5,457.6 L234.5,457.6 L236.5,457.9 L238.5,457.4 L240.5,457.8 L242.5,457.9 L244.5,457.5 L246.5,458.0 L248.5,457.8 L250.5,457.9 L252.5,457.6 L254.5,457.6 L256.5,457.6 L258.5,458.0 L260.5,457.8 L262.5,457.6 L264.5,457.7 L266.5,457.6 L268.5,457.4 L270.5,457.5 L272.5,457.9 L274.5,457.6 L276.5,458.0 L278.5,457.5 L280.5,457.6 L282.5,457.7 L284.5,457.5 L286.5,457.6 L288.5,458.0 L290.5,457.9 L292.5,457.9 L294.5,457.8 L296.5,457.9 L298.5,458.0 L300.5,457.7 L302.5,457.8 L304.5,457.4 L306.5,457.8 L308.5,457.7 L310.5,457.8 L312.5,457.8 L314.5,457.6 L316.5,457.4 L318.5,458.0 L320.5,457.5 L322.5,457.7 L324.5,457.6 L326.5,457.6 L328.5,457.8 L330.5,458.0 L332.5,457.6 L334.5,457.8 L336.5,457.6 L338.5,457.7 L340.5,457.6 L342.5,457.5 L344.5,457.5 L346.5,457.5 L348.5,457.9 L350.5,457.7 L352.5,457.5 L354.5,457.9 L356.5,458.0 L358.5,457.7 L360.5,457.5 L362.5,457.5 L364.5,457.5 L366.5,457.6 L368.5,457.5 L370.5,457.5 L372.5,457.6 L374.5,457.7 L376.5,457.9 L378.5,457.8 L380.5,457.6 L382.5,457.6 L384.5,457.7 L386.5,457.6 L388.5,457.6 L390.5,457.4 L392.5,457.6 L394.5,458.0 L396.5,457.5 L398.5,457.7 L400.5,457.8 L402.5,457.9 L404.5,457.5 L406.5,457.6 L408.5,457.5 L410.5,457.6 L412.5,457.7 L414.5,458.0 L416.5,457.9 L418.5,457.9 L420.5,457.4 L422.5,457.4 L424.5,457.8 L426.5,457.9 L428.5,457.7 L430.5,457.7 L432.5,457.4 L434.5,457.6 L436.5,458.0 L438.5,457.9 L440.5,457.9 L442.5,458.0 L444.5,457.5 L446.5,457.5 L448.5,457.5 L450.5,457.7 L452.5,457.8 L454.5,458.0 L456.5,457.8 L458.5,457.8 L460.5,457.9 L462.5,457.7 L464.5,457.7 L466.5,457.4 L468.5,457.9 L470.5,457.5 L472.5,457.9 L474.5,457.8 L476.5,457.6 L478.5,457.5 L480.5,457.5 L482.5,457.8 L484.5,457.8 L486.5,457.5 L488.5,457.4 L490.5,457.7 L492.5,457.7 L494.5,457.6 L496.5,457.5 L498.5,457.8 L500.5,457.4 L502.5,457.6 L504.5,457.7 L506.5,458.0 L508.5,457.8 L510.5,457.9 L512.5,457.7 L514.5,457.5 L516.5,457.5 L518.5,458.0 L520.5,457.8 L522.5,457.6 L524.5,457.4 L526.5,457.7 L528.5,457.8 L530.5,457.6 L532.5,457.6 L534.5,457.8 L536.5,458.0 L538.5,457.5 L540.5,457.4 L542.5,457.6 L544.5,457.6 L546.5,457.8 L548.5,457.5 L550.5,457.9 L552.5,457.8 L554.5,457.7 L556.5,457.5 L558.5,458.0 L560.5,457.6 L562.5,457.9 L564.5,457.5 L566.5,457.5 L568.5,457.9 L570.5,457.6 L572.5,458.0 L574.5,457.7 L576.5,457.5 L578.5,457.5 L580.5,457.6 L582.5,457.8 L584.5,458.0 L586.5,457.5 L588.5,457.6 L590.5,457.5 L592.5,458.0 L594.5,457.5 L596.5,457.4 L598.5,457.4 L600.5,457.6 L602.5,457.9 L604.5,457.9 L606.5,457.8 L608.5,458.0 L610.5,458.0 L612.5,457.6 L614.5,457.5 L616.5,458.0 L618.5,457.8 L620.5,457.4 L622.5,457.8 L624.5,457.6 L626.5,457.6 L628.5,457.6 L630.5,457.5 L632.5,457.4 L634.5,457.6 L636.5,457.6 L638.5,458.0 L640.5,457.5 L642.5,458.0 L644.5,457.5 L646.5,457.6 L648.5,457.9 L650.5,457.9 L652.5,457.7 L654.5,457.4 L656.5,457.7 L658.5,457.6 L660.5,457.9 L662.5,457.5 L664.5,457.6 L666.5,457.9 L668.5,457.4 L670.5,457.6 L672.5,457.9 L674.5,457.9 L676.5,457.4 L678.5,457.4 L680.5,457.4 L682.5,457.9 L684.5,457.6 L686.5,457.8 L688.5,457.9 L690.5,457.6 L692.5,457.6 L694.5,458.0 L696.5,457.8 L698.5,457.6 L700.5,457.8 L702.5,457.6 L704.5,457.6 L706.5,457.4 L708.5,457.9 L710.5,457.9 L712.5,457.8 L714.5,458.0 L716.5,457.4 L718.5,457.5 L720.5,457.7 L722.5,458.0 L724.5,458.0 L726.5,457.6 L728.5,457.5 L730.5,457.7 L732.5,457.7 L734.5,458.0 L736.5,457.5 L738.5,457.9 L740.5,457.8 L742.5,457.9 L744.5,457.9 L746.5,457.8 L748.5,457.6 L750.5,457.6 L752.5,457.6 L754.5,457.9 L756.5,457.4 L758.5,457.5 L760.5,457.8 L762.5,457.5 L764.5,457.4 L766.5,457.4 L768.5,457.7 L770.5,457.6 L772.5,458.0 L774.5,457.9 L776.5,458.0 L778.5,457.6 L780.5,457.4 L782.5,457.5 L784.5,457.7 L786.5,457.8 L788.5,457.7 L790.5,457.5 L792.5,457.6 L794.5,457.8 L796.5,457.8 L798.5,457.8 L800.5,457.9 L802.5,457.8 L804.5,457.5 L806.5,457.9 L808.5,457.6 L810.5,457.7 L812.5,457.6 L814.5,457.8 L816.5,457.5 L818.5,457.5 L820.5,457.5 L822.5,457.5 L824.5,457.9 L826.5,457.7 L828.5,457.6 L830.5,457.6 L832.5,458.0 L834.5,457.7 L836.5,457.5 L838.5,457.9 L840.5,457.8 L842.5,458.0 L844.5,457.5 L846.5,457.7 L848.5,457.9 L850.5,457.9 L852.5,457.9 L854.5,457.4 L856.5,457.6 L858.5,457.5 L860.5,457.5 L862.5,458.0 L864.5,457.7 L866.5,458.0 L868.5,457.6 L870.5,457.9 L872.5,457.7 L874.5,457.6 L876.5,457.9 L878.5,458.0 L880.5,457.5 L882.5,457.8 L884.5,457.8 L886.5,457.5 L888.5,457.6 L890.5,457.5 L892.5,457.5 L894.5,457.6 L896.5,457.8 L898.5,457.8 L900.5,457.5 L902.5,457.4 L904.5,457.6 L906.5,457.8 L908.5,457.5 L910.5,457.6 L912.5,457.5 L914.5,457.9 L916.5,457.7 L918.5,457.4 L920.5,457.5 L922.5,457.6 L924.5,457.7 L926.5,457.8 L928.5,457.5 L930.5,457.5 L932.5,457.8 L934.5,457.6 L936.5,457.6" stroke="#4257c9" stroke-width="2.2" fill="none" stroke-linejoin="round" />
<path d="M40.5,457.9 L42.0,458.6 L43.5,457.9 L45.0,458.2 L46.5,458.0 L48.0,458.0 L49.5,458.5 L51.0,458.6 L52.5,458.0 L54.0,457.8 L55.5,458.3 L57.0,457.8 L58.5,457.6 L60.0,458.5 L61.5,458.0 L63.0,458.4 L64.5,458.0 L66.0,458.5 L67.5,458.1 L69.0,457.8 L70.5,457.6 L72.0,458.2 L73.5,458.2 L75.0,458.5 L76.5,457.7 L78.0,458.2 L79.5,458.0 L81.0,458.1 L82.5,457.8 L84.0,457.9 L85.5,458.1 L87.0,458.5 L88.5,457.7 L90.0,458.1 L91.5,458.4 L93.0,458.6 L94.5,457.8 L96.0,457.7 L97.5,458.6 L99.0,458.6 L100.5,458.1 L102.0,457.7 L103.5,458.5 L105.0,458.0 L106.5,458.5 L108.0,458.2 L109.5,458.4 L111.0,457.8 L112.5,458.4 L114.0,457.8 L115.5,458.0 L117.0,458.5 L118.5,458.4 L120.0,457.8 L121.5,457.8 L123.0,458.0 L124.5,458.1 L126.0,458.0 L127.5,457.7 L129.0,457.9 L130.5,458.3 L132.0,458.5 L133.5,457.6 L135.0,458.2 L136.5,458.4 L138.0,457.6 L139.5,458.4 L141.0,457.7 L142.5,458.2 L144.0,458.2 L145.5,458.2 L147.0,457.9 L148.5,458.0 L150.0,458.2 L151.5,458.0 L153.0,458.3 L154.5,458.1 L156.0,458.0 L157.5,457.6 L159.0,458.2 L160.5,458.1 L162.0,457.8 L163.5,458.4 L165.0,458.4 L166.5,458.1 L168.0,457.8 L169.5,458.1 L171.0,457.7 L172.5,457.7 L174.0,458.0 L175.5,457.7 L177.0,458.1 L178.5,458.1 L180.0,457.6 L181.5,458.2 L183.0,457.7 L184.5,458.3 L186.0,458.4 L187.5,458.1 L189.0,457.7 L190.5,458.1 L192.0,458.0 L193.5,458.6 L195.0,457.7 L196.5,458.5 L198.0,458.6 L199.5,458.3 L201.0,458.4 L202.5,457.8 L204.0,458.6 L205.5,458.1 L207.0,458.6 L208.5,458.5 L210.0,457.8 L211.5,458.4 L213.0,458.5 L214.5,457.7 L216.0,458.0 L217.5,458.4 L219.0,457.8 L220.5,458.5 L222.0,457.9 L223.5,458.4 L225.0,457.8 L226.5,458.1 L228.0,458.5 L229.5,457.8 L231.0,457.9 L232.5,458.1 L234.0,457.9 L235.5,457.6 L237.0,457.8 L238.5,457.8 L240.0,458.5 L241.5,458.3 L243.0,458.5 L244.5,457.8 L246.0,458.4 L247.5,457.7 L249.0,458.1 L250.5,458.2 L252.0,458.0 L253.5,458.5 L255.0,458.2 L256.5,458.2 L258.0,458.5 L259.5,457.7 L261.0,458.6 L262.5,458.2 L264.0,458.0 L265.5,458.4 L267.0,457.9 L268.5,458.6 L270.0,458.2 L271.5,458.0 L273.0,458.4 L274.5,458.1 L276.0,457.8 L277.5,458.4 L279.0,457.7 L280.5,458.4 L282.0,457.9 L283.5,458.2 L285.0,458.6 L286.5,458.2 L288.0,458.3 L289.5,457.9 L291.0,457.6 L292.5,457.6 L294.0,457.8 L295.5,458.2 L297.0,458.0 L298.5,458.1 L300.0,458.5 L301.5,457.7 L303.0,457.8 L304.5,458.3 L306.0,457.6 L307.5,457.6 L309.0,458.0 L310.5,457.7 L312.0,458.0 L313.5,457.8 L315.0,458.2 L316.5,458.2 L318.0,457.8 L319.5,458.2 L321.0,458.1 L322.5,457.7 L324.0,458.5 L325.5,457.9 L327.0,457.8 L328.5,457.7 L330.0,458.2 L331.5,458.5 L333.0,458.4 L334.5,458.0 L336.0,457.9 L337.5,457.6 L339.0,458.3 L340.5,458.2 L342.0,458.0 L343.5,458.3 L345.0,458.1 L346.5,458.5 L348.0,458.3 L349.5,457.9 L351.0,458.5 L352.5,457.7 L354.0,458.1 L355.5,458.0 L357.0,457.8 L358.5,457.7 L360.0,458.4 L361.5,457.6 L363.0,458.2 L364.5,458.5 L366.0,457.8 L367.5,457.8 L369.0,458.2 L370.5,458.1 L372.0,458.2 L373.5,458.4 L375.0,457.8 L376.5,457.9 L378.0,457.9 L379.5,457.7 L381.0,458.5 L382.5,458.4 L384.0,458.3 L385.5,457.6 L387.0,458.5 L388.5,458.4 L390.0,458.1 L391.5,458.4 L393.0,458.1 L394.5,457.8 L396.0,457.7 L397.5,457.8 L399.0,457.6 L400.5,457.9 L402.0,458.4 L403.5,458.3 L405.0,458.5 L406.5,458.3 L408.0,457.9 L409.5,458.2 L411.0,458.0 L412.5,458.4 L414.0,458.1 L415.5,457.9 L417.0,458.3 L418.5,458.6 L420.0,457.8 L421.5,458.5 L423.0,457.6 L424.5,457.9 L426.0,457.8 L427.5,458.4 L429.0,458.6 L430.5,458.4 L432.0,457.9 L433.5,458.5 L435.0,457.9 L436.5,457.8 L438.0,458.5 L439.5,458.2 L441.0,458.3 L442.5,458.3 L444.0,458.6 L445.5,458.1 L447.0,458.4 L448.5,458.3 L450.0,458.5 L451.5,458.0 L453.0,458.3 L454.5,458.2 L456.0,457.9 L457.5,457.8 L459.0,458.2 L460.5,457.7 L462.0,458.5 L463.5,457.8 L465.0,457.6 L466.5,457.7 L468.0,458.5 L469.5,458.0 L471.0,457.8 L472.5,457.6 L474.0,457.6 L475.5,458.3 L477.0,458.2 L478.5,458.3 L480.0,458.3 L481.5,457.7 L483.0,458.2 L484.5,458.0 L486.0,458.4 L487.5,458.4 L489.0,458.5 L490.5,457.7 L492.0,458.5 L493.5,458.5 L495.0,458.6 L496.5,457.7 L498.0,457.8 L499.5,457.7 L501.0,457.6 L502.5,458.5 L504.0,458.4 L505.5,458.2 L507.0,458.4 L508.5,458.2 L510.0,457.9 L511.5,457.7 L513.0,457.7 L514.5,458.4 L516.0,457.8 L517.5,457.9 L519.0,458.0 L520.5,457.6 L522.0,457.9 L523.5,457.9 L525.0,458.3 L526.5,458.0 L528.0,457.9 L529.5,458.6 L531.0,458.1 L532.5,458.5 L534.0,458.2 L535.5,457.6 L537.0,458.0 L538.5,458.0 L540.0,458.4 L541.5,458.0 L543.0,458.3 L544.5,458.1 L546.0,457.8 L547.5,458.5 L549.0,457.7 L550.5,458.4 L552.0,457.8 L553.5,457.6 L555.0,457.8 L556.5,458.4 L558.0,458.6 L559.5,457.6 L561.0,458.1 L562.5,458.1 L564.0,458.4 L565.5,457.8 L567.0,458.1 L568.5,458.0 L570.0,458.4 L571.5,457.9 L573.0,458.6 L574.5,457.9 L576.0,457.8 L577.5,458.3 L579.0,458.1 L580.5,457.7 L582.0,458.2 L583.5,457.7 L585.0,458.4 L586.5,458.3 L588.0,458.4 L589.5,458.2 L591.0,458.0 L592.5,458.0 L594.0,458.0 L595.5,458.5 L597.0,457.7 L598.5,458.5 L600.0,457.6 L601.5,457.8 L603.0,457.9 L604.5,458.5 L606.0,458.1 L607.5,458.0 L609.0,458.5 L610.5,457.8 L612.0,458.1 L613.5,458.1 L615.0,458.4 L616.5,458.4 L618.0,458.3 L619.5,458.0 L621.0,457.9 L622.5,457.8 L624.0,458.5 L625.5,458.3 L627.0,458.4 L628.5,457.8 L630.0,458.0 L631.5,458.4 L633.0,458.2 L634.5,457.7 L636.0,458.1 L637.5,458.5 L639.0,457.8 L640.5,457.8 L642.0,457.9 L643.5,458.3 L645.0,458.5 L646.5,457.8 L648.0,457.8 L649.5,457.9 L651.0,457.9 L652.5,458.1 L654.0,457.8 L655.5,457.9 L657.0,457.8 L658.5,458.6 L660.0,458.3 L661.5,457.7 L663.0,458.6 L664.5,457.7 L666.0,458.0 L667.5,458.6 L669.0,458.4 L670.5,458.3 L672.0,458.0 L673.5,457.8 L675.0,458.2 L676.5,457.7 L678.0,457.8 L679.5,458.0 L681.0,457.6 L682.5,458.0 L684.0,458.4 L685.5,458.3 L687.0,458.1 L688.5,458.2 L690.0,458.1 L691.5,457.8 L693.0,458.2 L694.5,458.0 L696.0,458.3 L697.5,458.5 L699.0,458.0 L700.5,458.2 L702.0,458.4 L703.5,458.0 L705.0,457.8 L706.5,458.3 L708.0,458.5 L709.5,458.4 L711.0,458.3 L712.5,458.5 L714.0,458.3 L715.5,458.2 L717.0,458.1 L718.5,457.9 L720.0,458.2 L721.5,457.7 L723.0,458.0 L724.5,458.4 L726.0,458.3 L727.5,458.2 L729.0,457.9 L730.5,458.0 L732.0,458.1 L733.5,458.2 L735.0,458.0 L736.5,458.3 L738.0,458.5 L739.5,457.8 L741.0,458.3 L742.5,458.4 L744.0,458.0 L745.5,458.1 L747.0,458.6 L748.5,457.6 L750.0,458.2 L751.5,457.8 L753.0,458.4 L754.5,458.5 L756.0,458.1 L757.5,457.7 L759.0,458.2 L760.5,458.1 L762.0,458.3 L763.5,458.1 L765.0,458.2 L766.5,458.4 L768.0,458.1 L769.5,458.0 L771.0,458.6 L772.5,457.8 L774.0,458.3 L775.5,458.0 L777.0,458.4 L778.5,457.7 L780.0,458.6 L781.5,458.0 L783.0,457.7 L784.5,457.9 L786.0,458.0 L787.5,457.6 L789.0,458.0 L790.5,458.0 L792.0,458.3 L793.5,458.0 L795.0,457.9 L796.5,457.8 L798.0,458.3 L799.5,458.5 L801.0,458.1 L802.5,457.8 L804.0,458.4 L805.5,458.0 L807.0,457.8 L808.5,457.7 L810.0,458.4 L811.5,458.4 L813.0,458.2 L814.5,458.1 L816.0,458.2 L817.5,457.8 L819.0,458.6 L820.5,458.0 L822.0,458.2 L823.5,458.4 L825.0,458.4 L826.5,458.1 L828.0,457.9 L829.5,458.2 L831.0,457.7 L832.5,458.4 L834.0,458.0 L835.5,458.5 L837.0,457.9 L838.5,458.0 L840.0,457.9 L841.5,458.0 L843.0,457.8 L844.5,457.6 L846.0,458.3 L847.5,457.9 L849.0,457.9 L850.5,457.9 L852.0,458.1 L853.5,458.0 L855.0,458.2 L856.5,458.3 L858.0,458.0 L859.5,458.5 L861.0,458.5 L862.5,457.7 L864.0,458.4 L865.5,458.5 L867.0,458.4 L868.5,457.7 L870.0,458.4 L871.5,458.2 L873.0,457.6 L874.5,457.6 L876.0,458.6 L877.5,458.3 L879.0,457.9 L880.5,457.7 L882.0,457.8 L883.5,457.8 L885.0,458.4 L886.5,458.0 L888.0,457.8 L889.5,458.5 L891.0,458.4 L892.5,457.8 L894.0,458.5 L895.5,458.2 L897.0,458.4 L898.5,458.3 L900.0,458.5 L901.5,458.4 L903.0,458.4 L904.5,457.8 L906.0,458.3 L907.5,458.1 L909.0,458.4 L910.5,458.0 L912.0,458.5 L913.5,458.2 L915.0,457.9 L916.5,457.8 L918.0,457.7 L919.5,458.1 L921.0,457.7 L922.5,458.1 L924.0,457.8 L925.5,458.1 L927.0,458.1 L928.5,458.1 L930.0,458.5 L931.5,457.6 L933.0,458.4 L934.5,458.1 L936.0,458.2" stroke="#2cc3d6" stroke-width="1.0" fill="none" stroke-linejoin="round" />
<path d="M40.5,466.4 L44.5,466.5 L48.5,466.4 L52.5,466.4 L56.5,466.6 L60.5,466.4 L64.5,466.6 L68.5,466.6 L72.5,466.4 L76.5,466.5 L80.5,466.6 L84.5,466.6 L88.5,466.4 L92.5,466.6 L96.5,466.4 L100.5,466.3 L104.5,466.4 L108.5,466.1 L112.5,466.3 L116.5,466.2 L120.5,466.1 L124.5,466.2 L128.5,466.0 L132.5,465.9 L136.5,465.9 L140.5,465.9 L144.5,465.7 L148.5,465.7 L152.5,465.7 L156.5,465.7 L160.5,465.7 L164.5,465.5 L168.5,465.7 L172.5,465.5 L176.5,465.5 L180.5,465.5 L184.5,465.5 L188.5,465.7 L192.5,465.6 L196.5,465.6 L200.5,465.5 L204.5,465.5 L208.5,465.6 L212.5,465.7 L216.5,465.7 L220.5,465.8 L224.5,465.6 L228.5,465.9 L232.5,466.0 L236.5,465.9 L240.5,465.8 L244.5,466.0 L248.5,465.9 L252.5,466.1 L256.5,466.3 L260.5,466.3 L264.5,466.3 L268.5,466.4 L272.5,466.5 L276.5,466.4 L280.5,466.5 L284.5,466.5 L288.5,466.6 L292.5,466.5 L296.5,466.6 L300.5,466.4 L304.5,466.6 L308.5,466.5 L312.5,466.6 L316.5,466.4 L320.5,466.4 L324.5,466.3 L328.5,466.5 L332.5,466.5 L336.5,466.4 L340.5,466.2 L344.5,466.3 L348.5,466.3 L352.5,466.1 L356.5,466.0 L360.5,466.0 L364.5,465.9 L368.5,465.8 L372.5,465.8 L376.5,465.8 L380.5,465.9 L384.5,465.6 L388.5,465.7 L392.5,465.5 L396.5,465.5 L400.5,465.7 L404.5,465.6 L408.5,465.7 L412.5,465.5 L416.5,465.4 L420.5,465.5 L424.5,465.6 L428.5,465.7 L432.5,465.7 L436.5,465.6 L440.5,465.6 L444.5,465.5 L448.5,465.7 L452.5,465.6 L456.5,465.7 L460.5,465.7 L464.5,465.7 L468.5,466.0 L472.5,465.9 L476.5,466.2 L480.5,466.0 L484.5,466.2 L488.5,466.1 L492.5,466.1 L496.5,466.4 L500.5,466.3 L504.5,466.4 L508.5,466.3 L512.5,466.3 L516.5,466.5 L520.5,466.6 L524.5,466.6 L528.5,466.6 L532.5,466.4 L536.5,466.6 L540.5,466.6 L544.5,466.5 L548.5,466.6 L552.5,466.4 L556.5,466.6 L560.5,466.5 L564.5,466.2 L568.5,466.2 L572.5,466.3 L576.5,466.3 L580.5,466.1 L584.5,466.1 L588.5,466.1 L592.5,465.9 L596.5,466.1 L600.5,465.9 L604.5,465.7 L608.5,465.8 L612.5,465.8 L616.5,465.7 L620.5,465.7 L624.5,465.5 L628.5,465.7 L632.5,465.5 L636.5,465.6 L640.5,465.6 L644.5,465.5 L648.5,465.5 L652.5,465.6 L656.5,465.7 L660.5,465.6 L664.5,465.6 L668.5,465.5 L672.5,465.5 L676.5,465.8 L680.5,465.7 L684.5,465.8 L688.5,465.7 L692.5,465.8 L696.5,466.0 L700.5,466.0 L704.5,466.0 L708.5,466.0 L712.5,466.1 L716.5,466.2 L720.5,466.1 L724.5,466.3 L728.5,466.3 L732.5,466.4 L736.5,466.5 L740.5,466.3 L744.5,466.3 L748.5,466.4 L752.5,466.5 L756.5,466.5 L760.5,466.6 L764.5,466.6 L768.5,466.4 L772.5,466.6 L776.5,466.6 L780.5,466.6 L784.5,466.5 L788.5,466.4 L792.5,466.5 L796.5,466.5 L800.5,466.4 L804.5,466.4 L808.5,466.2 L812.5,466.1 L816.5,466.1 L820.5,466.2 L824.5,465.9 L828.5,466.0 L832.5,466.0 L836.5,465.8 L840.5,465.8 L844.5,465.8 L848.5,465.7 L852.5,465.6 L856.5,465.6 L860.5,465.7 L864.5,465.7 L868.5,465.5 L872.5,465.4 L876.5,465.6 L880.5,465.6 L884.5,465.4 L888.5,465.6 L892.5,465.7 L896.5,465.7 L900.5,465.6 L904.5,465.6 L908.5,465.7 L912.5,465.6 L916.5,465.6 L920.5,465.7 L924.5,465.9 L928.5,465.8 L932.5,465.9 L936.5,465.9" stroke="#2b90e6" stroke-width="2.2" fill="none" stroke-linejoin="round" />
<path d="M40.5,367.0 L42.5,366.8 L44.5,366.8 L46.5,367.2 L48.5,366.9 L50.5,366.8 L52.5,367.1 L54.5,367.1 L56.5,366.8 L58.5,367.0 L60.5,366.9 L62.5,367.0 L64.5,366.8 L66.5,366.8 L68.5,367.2 L70.5,367.2 L72.5,367.0 L74.5,367.0 L76.5,366.9 L78.5,367.1 L80.5,367.0 L82.5,367.2 L84.5,367.1 L86.5,367.1 L88.5,367.2 L90.5,366.9 L92.5,366.8 L94.5,366.9 L96.5,366.9 L98.5,366.8 L100.5,366.8 L102.5,367.0 L104.5,367.2 L106.5,367.0 L108.5,367.2 L110.5,367.2 L112.5,366.8 L114.5,367.0 L116.5,367.0 L118.5,366.8 L120.5,367.2 L122.5,366.9 L124.5,367.0 L126.5,367.1 L128.5,367.2 L130.5,367.1 L132.5,367.0 L134.5,367.0 L136.5,366.9 L138.5,367.2 L140.5,367.2 L142.5,366.9 L144.5,366.8 L146.5,366.9 L148.5,366.9 L150.5,367.2 L152.5,367.2 L154.5,367.1 L156.5,366.8 L158.5,367.1 L160.5,367.1 L162.5,367.1 L164.5,367.2 L166.5,366.8 L168.5,366.8 L170.5,367.1 L172.5,367.2 L174.5,367.1 L176.5,366.9 L178.5,367.0 L180.7,369.8 L182.8,372.7 L185.0,375.5 L187.4,378.5 L189.8,381.6 L192.3,384.7 L194.7,387.7 L198.0,389.5 L200.2,391.8 L202.5,394.0 L204.7,396.3 L206.9,398.6 L210.0,400.0 L212.5,402.4 L215.0,404.8 L217.4,407.2 L219.9,409.6 L222.5,400.0 L225.5,390.5 L228.7,387.3 L230.7,387.4 L232.7,387.1 L234.8,387.2 L236.8,387.2 L238.8,387.1 L240.8,387.3 L242.8,387.2 L244.8,387.2 L246.9,387.1 L248.9,387.4 L250.9,387.1 L252.9,387.4 L254.9,387.2 L257.0,387.1 L259.0,387.5 L261.0,387.2 L263.0,387.5 L265.0,387.5 L267.1,387.5 L269.1,387.1 L271.1,387.3 L273.1,387.1 L275.1,387.5 L277.1,387.5 L279.2,387.4 L281.2,387.3 L283.2,387.3 L286.0,381.0 L289.0,372.0 L291.8,366.7 L295.0,366.9 L297.0,367.1 L299.0,367.0 L301.0,367.1 L303.0,366.8 L305.0,366.9 L307.0,366.8 L309.0,367.1 L311.0,367.0 L313.1,366.8 L315.1,367.2 L317.1,366.9 L319.1,367.0 L321.1,366.8 L323.1,366.9 L325.1,367.1 L327.1,366.9 L329.1,366.9 L331.1,367.0 L333.1,366.9 L335.1,367.2 L337.1,366.8 L339.1,367.2 L341.1,366.8 L343.1,367.2 L345.1,367.1 L347.1,366.9 L349.2,367.0 L351.2,366.9 L353.2,366.9 L355.2,366.9 L357.2,366.9 L359.2,367.2 L361.2,367.2 L363.2,367.2 L365.2,366.8 L367.2,366.9 L369.2,367.2 L371.2,366.8 L373.2,367.1 L375.2,366.9 L377.2,367.2 L379.2,366.8 L381.2,367.1 L383.2,366.9 L385.3,366.8 L387.3,366.8 L389.3,367.1 L391.3,367.0 L393.3,366.9 L395.3,367.0 L397.3,367.2 L399.3,366.9 L401.3,367.0 L403.3,366.8 L405.3,366.9 L407.3,367.1 L409.3,367.1 L411.3,366.9 L413.3,366.8 L415.3,366.8 L417.3,367.0 L419.3,367.0 L421.4,366.9 L423.4,366.9 L425.4,367.0 L427.4,367.1 L429.4,367.1 L431.4,367.0 L433.4,366.9 L435.4,366.8 L437.4,367.1 L439.4,367.0 L441.4,367.1 L443.4,366.8 L445.4,367.1 L447.4,366.9 L449.4,367.2 L451.4,367.2 L453.4,367.0 L455.5,366.8 L457.5,367.2 L459.5,367.0 L461.5,367.2 L463.5,366.9 L465.5,366.9 L467.5,367.1 L469.5,366.9 L471.5,366.9 L473.5,366.9 L475.5,367.0 L477.5,366.8 L479.5,367.0 L481.5,367.0 L483.5,367.0 L485.5,366.8 L487.5,367.1 L489.5,367.1 L491.6,367.2 L493.6,366.9 L495.6,367.1 L497.6,366.9 L499.6,367.1 L501.6,366.8 L503.6,367.2 L505.6,367.2 L507.6,367.0 L509.6,367.0 L511.6,367.0 L513.6,367.0 L515.6,366.8 L517.6,367.2 L519.6,366.9 L521.6,366.9 L523.6,366.8 L525.6,366.9 L527.7,367.1 L529.7,366.8 L531.7,366.8 L533.7,367.1 L535.7,366.9 L537.7,366.8 L539.7,367.0 L541.7,367.0 L543.7,367.0 L545.7,367.1 L547.7,366.8 L549.7,367.2 L551.7,367.1 L553.7,366.8 L555.7,366.8 L557.7,367.0 L559.7,367.0 L561.7,366.9 L563.8,366.8 L565.8,367.0 L567.8,366.8 L569.8,367.0 L571.8,367.2 L573.8,366.8 L575.8,367.0 L577.8,367.1 L579.8,367.0 L582.2,369.5 L584.6,372.0 L587.0,372.3 L587.3,377.0 L587.6,480.0 L588.2,480.0 L588.5,376.5 L590.0,377.0 L592.2,379.6 L594.3,382.3 L596.4,385.0 L598.6,387.5 L600.7,387.7 L602.7,387.8 L604.8,387.5 L606.8,387.6 L608.9,387.7 L610.9,387.6 L613.0,387.5 L615.0,387.8 L617.1,387.7 L619.1,387.5 L621.2,387.5 L623.2,387.5 L625.3,387.5 L627.3,387.8 L629.4,387.7 L631.4,387.7 L633.5,387.7 L635.5,387.7 L637.6,387.4 L639.7,387.6 L641.7,387.7 L643.8,387.7 L645.8,387.4 L647.9,387.5 L649.9,387.6 L652.0,387.5 L654.0,387.5 L656.1,387.3 L658.1,387.5 L660.2,387.5 L662.2,387.3 L664.3,387.4 L666.3,387.7 L668.4,387.6 L670.4,387.7 L672.5,387.5 L674.8,382.8 L677.0,378.0 L679.8,372.3 L682.7,366.6 L686.0,367.1 L688.0,367.1 L690.0,367.2 L692.1,367.2 L694.1,366.8 L696.1,367.1 L698.1,366.9 L700.2,367.1 L702.2,366.9 L704.2,367.0 L706.2,367.2 L708.3,367.1 L710.3,366.9 L712.3,367.0 L714.3,367.0 L716.4,367.2 L718.4,366.9 L720.4,366.9 L722.4,367.1 L724.5,366.8 L726.5,367.0 L728.5,367.2 L730.5,367.0 L732.6,366.9 L734.6,367.0 L736.6,367.0 L738.6,366.8 L740.7,366.8 L742.7,366.8 L744.7,366.9 L746.7,367.0 L748.7,366.9 L750.8,366.9 L752.8,366.8 L754.8,367.0 L756.8,367.1 L758.9,367.0 L760.9,367.0 L762.9,367.1 L764.9,366.9 L767.0,367.1 L769.0,367.0 L771.0,367.0 L773.0,367.0 L775.1,367.0 L777.1,366.9 L779.1,366.9 L781.1,366.9 L783.2,367.0 L785.2,366.9 L787.2,367.0 L789.2,366.8 L791.3,366.9 L793.3,367.2 L795.3,367.0 L797.4,369.5 L799.5,371.9 L801.7,374.3 L803.8,376.8 L805.5,377.3 L807.4,381.0 L809.6,383.0 L811.8,385.0 L814.0,387.0 L816.2,389.3 L818.3,391.6 L820.5,393.9 L822.7,396.2 L825.5,391.0 L828.5,387.1 L830.5,387.2 L832.6,387.2 L834.6,387.1 L836.7,387.4 L838.7,387.1 L840.8,387.3 L842.8,387.1 L844.8,387.0 L846.9,387.4 L848.9,387.2 L851.0,387.0 L853.0,387.2 L855.1,387.2 L857.1,387.4 L859.2,387.1 L861.2,387.1 L863.2,387.5 L865.3,387.4 L867.3,387.1 L869.4,387.2 L871.4,387.2 L873.5,387.4 L875.5,387.3 L877.5,387.4 L879.6,387.4 L881.6,387.3 L883.7,387.4 L885.7,387.4 L887.8,387.4 L889.8,387.3 L891.9,382.6 L894.0,378.0 L896.7,372.1 L899.4,366.3 L903.0,367.0 L905.0,367.1 L907.0,367.1 L909.0,367.2 L911.0,366.8 L913.0,367.2 L915.0,366.8 L917.0,367.1 L919.0,367.0 L921.0,367.0 L923.0,367.2 L925.0,367.0 L927.0,367.0 L929.0,367.1 L931.0,367.2 L933.0,367.0 L935.0,366.9 L937.0,367.0" stroke="#ea4a3b" stroke-width="2.2" fill="none" stroke-linejoin="round" />
<rect x="586.6" y="455.0" width="2.600" height="25.0" fill="#9b4fc4"/>
<path d="M40.5,295.0 V480.5 M40.5,480.5 H937.0 M42.5,480.5 v4.5 M132.5,480.5 v4.5 M221.5,480.5 v4.5 M311.5,480.5 v4.5 M400.5,480.5 v4.5 M489.5,480.5 v4.5 M579.5,480.5 v4.5 M668.5,480.5 v4.5 M758.5,480.5 v4.5 M847.5,480.5 v4.5" stroke="#8c8c8c" stroke-width="1" fill="none"/>
</svg>
 </div>

 <!-- CONSOLE PANEL -->
 <div class="a panel" style="left:720px;top:606px;width:951px;height:330px;border-radius:4px 4px 0 0">
  <div class="a ph"></div>
  <svg style="left:16px;top:12px" width="24" height="24" viewBox="0 0 24 24" fill="#fff"><path d="M13,19V16H21V19H13M8.500,13L2.470,7H6.710L11.670,11.950C12.250,12.540 12.250,13.500 11.670,14.070L6.740,19H2.500L8.500,13Z"/></svg>
  <svg style="left:774.700px;top:15.800px" width="16.500" height="16.500" viewBox="0 0 24 24" fill="#fff"><path d="M9,3V4H4V6H5V19A2,2 0 0,0 7,21H17A2,2 0 0,0 19,19V6H20V4H15V3H9M9,8H11V17H9V8M13,8H15V17H13V8Z"/></svg>
  <svg style="left:822.400px;top:15.800px" width="16.500" height="16.500" viewBox="0 0 24 24" fill="#fff"><path d="M10,19H13V22H10V19M12,2C17.350,2.220 19.680,7.620 16.500,11.670C15.670,12.670 14.330,13.330 13.670,14.170C13,15 13,16 13,17H10C10,15.330 10,13.920 10.670,12.920C11.330,11.920 12.670,11.330 13.500,10.670C15.920,8.430 15.320,5.260 12,5A3,3 0 0,0 9,8H6A6,6 0 0,1 12,2Z"/></svg>
  <svg style="left:870.700px;top:15.800px" width="16.500" height="16.500" viewBox="0 0 24 24" fill="#fff"><path d="M12,15.500A3.500,3.500 0 0,1 8.500,12A3.500,3.500 0 0,1 12,8.500A3.500,3.500 0 0,1 15.500,12A3.500,3.500 0 0,1 12,15.500M19.430,12.970C19.470,12.650 19.500,12.330 19.500,12C19.500,11.670 19.470,11.340 19.430,11L21.540,9.370C21.730,9.220 21.780,8.950 21.660,8.730L19.660,5.270C19.540,5.050 19.270,4.960 19.050,5.050L16.560,6.050C16.040,5.660 15.500,5.320 14.870,5.070L14.500,2.420C14.460,2.180 14.250,2 14,2H10C9.750,2 9.540,2.180 9.500,2.420L9.130,5.070C8.500,5.320 7.960,5.660 7.440,6.050L4.950,5.050C4.730,4.960 4.460,5.050 4.340,5.270L2.340,8.730C2.210,8.950 2.270,9.220 2.460,9.370L4.570,11C4.530,11.340 4.500,11.670 4.500,12C4.500,12.330 4.530,12.650 4.570,12.970L2.460,14.630C2.270,14.780 2.210,15.050 2.340,15.270L4.340,18.730C4.460,18.950 4.730,19.030 4.950,18.950L7.440,17.940C7.960,18.340 8.500,18.680 9.130,18.930L9.500,21.580C9.540,21.820 9.750,22 10,22H14C14.250,22 14.460,21.820 14.500,21.580L14.870,18.930C15.500,18.670 16.040,18.340 16.560,17.940L19.050,18.950C19.270,19.030 19.540,18.950 19.660,18.730L21.660,15.270C21.780,15.050 21.730,14.780 21.540,14.630L19.430,12.970Z"/></svg>
  <svg style="left:915px;top:12px" width="24" height="24" viewBox="0 0 24 24" fill="#fff"><path d="M7.410,8.580L12,13.170L16.590,8.580L18,10L12,16L6,10L7.410,8.580Z"/></svg>
  <svg style="left:17px;top:73px" width="22" height="22" viewBox="0 0 24 24" fill="#fff"><path d="M5.590,7.410L7,6L13,12L7,18L5.590,16.590L10.170,12L5.590,7.410M11.590,7.410L13,6L19,12L13,18L11.590,16.590L16.170,12L11.590,7.410Z"/></svg>
  <div class="a box" style="left:49px;top:64px;width:886px;height:40px;border-color:#5c5c5c"></div>
  <svg style="left:899px;top:72px" width="24" height="24" viewBox="0 0 24 24" fill="#fff"><path d="M2,21L23,12L2,3V10L17,12L2,14V21Z"/></svg>
  <div class="a hl" style="left:0;top:120px;width:951px"></div>
  <div class="a hl" style="left:0;top:167px;width:951px"></div>
 </div>
 <div class="a" style="left:0;top:0;width:1712px;height:904px;border:1px solid rgba(0,0,0,.75);border-left-color:rgba(0,0,0,.4);border-top-color:rgba(0,0,0,.4)"></div>
</div>
<!-- text layer (page coordinates) -->
<div class="a" style="left:0;top:0;width:1920px;height:1032px;clip-path:inset(0 9px 29px 0);will-change:transform">
<div class="t" style="left:23.00px;top:6.32px;font-size:12.5px;line-height:12.5px;color:#1b1b1b;letter-spacing:-0.210px;">Find Myprints</div>
<div class="t" style="left:14.30px;top:31.15px;font-size:14px;line-height:14px;color:#1b1b1b;letter-spacing:0.111px;">Document</div>
<div class="t" style="left:108.00px;top:31.15px;font-size:14px;line-height:14px;color:#1b1b1b;letter-spacing:0.281px;">About</div>
<div class="t" style="left:177.50px;top:31.15px;font-size:14px;line-height:14px;color:#1b1b1b;letter-spacing:-0.350px;">Language</div>
<div class="t" style="left:9.40px;top:100.79px;font-size:12.3px;line-height:12.3px;color:#1b1b1b;letter-spacing:0.252px;">Scan network segment (DNS)</div>
<div class="t" style="left:16.00px;top:124.19px;font-size:12.3px;line-height:12.3px;color:#1b1b1b;letter-spacing:-0.049px;">192.168.101.0</div>
<div class="t" style="left:9.60px;top:154.09px;font-size:12.3px;line-height:12.3px;color:#1b1b1b;letter-spacing:0.176px;">Equipment List:</div>
<div class="t" style="left:14.60px;top:171.90px;font-size:16.3px;line-height:16.3px;color:#fff;letter-spacing:-0.176px;">192.168.101.126</div>
<div class="t" style="left:14.60px;top:193.80px;font-size:16.3px;line-height:16.3px;color:#111;letter-spacing:-0.176px;">192.168.101.204</div>
<div class="t" style="left:308.00px;top:113.07px;font-size:20px;line-height:20px;color:#fff;letter-spacing:-0.050px;-webkit-text-stroke:0.25px #fff;">raspberrypi</div>
<div class="t" style="left:1584.00px;top:116.35px;font-size:14px;line-height:14px;color:#ef5350;letter-spacing:0.446px;-webkit-text-stroke:0.2px #ef5350;">EMERGENCY STOP</div>
<div class="t" style="left:281.00px;top:184.87px;font-size:20px;line-height:20px;color:#fff;letter-spacing:-0.207px;-webkit-text-stroke:0.25px #fff;">0% Printing</div>
<div class="t" style="left:259.20px;top:392.85px;font-size:14px;line-height:14px;color:#b9b9b9;letter-spacing:-0.340px;font-weight:700;">立方体_PLA_17h5m.gcode</div>
<div class="t" style="left:262.70px;top:430.35px;font-size:14px;line-height:14px;color:#b9b9b9;letter-spacing:-0.587px;font-weight:700;">立方体_ID_0_COPY_0</div>
<div class="t" style="left:259.00px;top:473.45px;font-size:14px;line-height:14px;color:#b9b9b9;letter-spacing:-0.291px;font-weight:700;">Preparing to Print...</div>
<div class="t" style="left:287.00px;top:560.95px;font-size:14px;line-height:14px;color:#fff;letter-spacing:-0.403px;font-weight:700;">Speed</div>
<div class="t" style="left:278.25px;top:583.05px;font-size:14px;line-height:14px;color:#fff;letter-spacing:0.545px;-webkit-text-stroke:0.2px #fff;">84 mm/s</div>
<div class="t" style="left:459.75px;top:560.95px;font-size:14px;line-height:14px;color:#fff;letter-spacing:-0.348px;font-weight:700;">Flow</div>
<div class="t" style="left:441.75px;top:583.05px;font-size:14px;line-height:14px;color:#fff;letter-spacing:0.474px;-webkit-text-stroke:0.2px #fff;">7.5 mm³/s</div>
<div class="t" style="left:615.00px;top:560.95px;font-size:14px;line-height:14px;color:#fff;letter-spacing:-0.197px;font-weight:700;">Filament</div>
<div class="t" style="left:607.00px;top:583.05px;font-size:14px;line-height:14px;color:#fff;letter-spacing:0.217px;-webkit-text-stroke:0.2px #fff;">131.10 mm</div>
<div class="t" style="left:793.25px;top:560.95px;font-size:14px;line-height:14px;color:#fff;letter-spacing:-0.372px;font-weight:700;">Layer</div>
<div class="t" style="left:785.00px;top:583.05px;font-size:14px;line-height:14px;color:#fff;letter-spacing:0.174px;-webkit-text-stroke:0.2px #fff;">1 of 750</div>
<div class="t" style="left:278.75px;top:622.15px;font-size:14px;line-height:14px;color:#fff;letter-spacing:-0.232px;font-weight:700;">Estimate</div>
<div class="t" style="left:279.75px;top:644.25px;font-size:14px;line-height:14px;color:#fff;letter-spacing:0.000px;-webkit-text-stroke:0.2px #fff;">54:09:34</div>
<div class="t" style="left:456.50px;top:622.15px;font-size:14px;line-height:14px;color:#fff;letter-spacing:-0.190px;font-weight:700;">Slicer</div>
<div class="t" style="left:448.00px;top:644.25px;font-size:14px;line-height:14px;color:#fff;letter-spacing:-0.062px;-webkit-text-stroke:0.2px #fff;">17:04:31</div>
<div class="t" style="left:627.25px;top:622.15px;font-size:14px;line-height:14px;color:#fff;letter-spacing:-0.181px;font-weight:700;">Total</div>
<div class="t" style="left:619.50px;top:644.25px;font-size:14px;line-height:14px;color:#fff;letter-spacing:0.040px;-webkit-text-stroke:0.2px #fff;">0:02:34</div>
<div class="t" style="left:798.25px;top:622.15px;font-size:14px;line-height:14px;color:#fff;letter-spacing:-0.490px;font-weight:700;">ETA</div>
<div class="t" style="left:785.50px;top:644.25px;font-size:14px;line-height:14px;color:#fff;letter-spacing:0.000px;-webkit-text-stroke:0.2px #fff;">10:39+1</div>
<div class="t" style="left:819.90px;top:518.72px;font-size:12.5px;line-height:12.5px;color:#fff;letter-spacing:-0.150px;font-weight:700;-webkit-text-stroke:0.3px #fff;">0</div>
<div class="t" style="left:271.60px;top:709.07px;font-size:20px;line-height:20px;color:#fff;letter-spacing:0.064px;-webkit-text-stroke:0.25px #fff;">Toolhead</div>
<div class="t" style="left:255.00px;top:760.15px;font-size:14px;line-height:14px;color:#c4c4c4;letter-spacing:0.093px;-webkit-text-stroke:0.35px #c4c4c4;">Position: absolute</div>
<div class="t" style="left:745.60px;top:760.15px;font-size:14px;line-height:14px;color:#c4c4c4;letter-spacing:-0.122px;-webkit-text-stroke:0.35px #c4c4c4;">adaptive-7F8047CA50</div>
<div class="t" style="left:384.30px;top:786.24px;font-size:12px;line-height:12px;color:#bdbdbd;letter-spacing:-0.055px;-webkit-text-stroke:0.2px #bdbdbd;">[ 234.54 ]</div>
<div class="t" style="left:603.20px;top:786.24px;font-size:12px;line-height:12px;color:#bdbdbd;letter-spacing:-0.045px;-webkit-text-stroke:0.2px #bdbdbd;">[ 108.05 ]</div>
<div class="t" style="left:829.80px;top:786.24px;font-size:12px;line-height:12px;color:#bdbdbd;letter-spacing:-0.108px;-webkit-text-stroke:0.2px #bdbdbd;">[ 0.180 ]</div>
<div class="t" style="left:247.00px;top:803.11px;font-size:15.7px;line-height:15.7px;color:#fff;letter-spacing:0.131px;-webkit-text-stroke:0.35px #fff;">X</div>
<div class="t" style="left:466.00px;top:803.11px;font-size:15.7px;line-height:15.7px;color:#fff;letter-spacing:-0.069px;-webkit-text-stroke:0.35px #fff;">Y</div>
<div class="t" style="left:685.00px;top:803.11px;font-size:15.7px;line-height:15.7px;color:#fff;letter-spacing:0.006px;-webkit-text-stroke:0.35px #fff;">Z</div>
<div class="t" style="left:384.60px;top:803.11px;font-size:15.7px;line-height:15.7px;color:#fff;letter-spacing:0.236px;-webkit-text-stroke:0.35px #fff;">247.89</div>
<div class="t" style="left:603.80px;top:803.11px;font-size:15.7px;line-height:15.7px;color:#fff;letter-spacing:0.203px;-webkit-text-stroke:0.35px #fff;">125.27</div>
<div class="t" style="left:831.00px;top:803.11px;font-size:15.7px;line-height:15.7px;color:#fff;letter-spacing:0.267px;-webkit-text-stroke:0.35px #fff;">0.200</div>
<div class="t" style="left:495.30px;top:850.84px;font-size:12px;line-height:12px;color:#727272;letter-spacing:0.124px;font-weight:700;-webkit-text-stroke:0.3px #727272;">ALL</div>
<div class="t" style="left:552.60px;top:850.84px;font-size:12px;line-height:12px;color:#727272;letter-spacing:1.039px;font-weight:700;-webkit-text-stroke:0.3px #727272;">Z-TILT</div>
<div class="t" style="left:269.75px;top:885.35px;font-size:14px;line-height:14px;color:#6c6c6c;letter-spacing:0.238px;-webkit-text-stroke:0.65px #6c6c6c;">−100</div>
<div class="t" style="left:375.50px;top:885.35px;font-size:14px;line-height:14px;color:#6c6c6c;letter-spacing:0.417px;-webkit-text-stroke:0.65px #6c6c6c;">−10</div>
<div class="t" style="left:481.75px;top:885.35px;font-size:14px;line-height:14px;color:#6c6c6c;letter-spacing:0.266px;-webkit-text-stroke:0.65px #6c6c6c;">−1</div>
<div class="t" style="left:554.25px;top:885.85px;font-size:14px;line-height:14px;color:#6c6c6c;letter-spacing:0.156px;font-weight:700;-webkit-text-stroke:0.6px #6c6c6c;">X</div>
<div class="t" style="left:619.75px;top:885.35px;font-size:14px;line-height:14px;color:#6c6c6c;letter-spacing:0.266px;-webkit-text-stroke:0.65px #6c6c6c;">+1</div>
<div class="t" style="left:717.50px;top:885.35px;font-size:14px;line-height:14px;color:#6c6c6c;letter-spacing:0.417px;-webkit-text-stroke:0.65px #6c6c6c;">+10</div>
<div class="t" style="left:815.75px;top:885.35px;font-size:14px;line-height:14px;color:#6c6c6c;letter-spacing:0.238px;-webkit-text-stroke:0.65px #6c6c6c;">+100</div>
<div class="t" style="left:269.75px;top:921.35px;font-size:14px;line-height:14px;color:#6c6c6c;letter-spacing:0.238px;-webkit-text-stroke:0.65px #6c6c6c;">−100</div>
<div class="t" style="left:375.50px;top:921.35px;font-size:14px;line-height:14px;color:#6c6c6c;letter-spacing:0.417px;-webkit-text-stroke:0.65px #6c6c6c;">−10</div>
<div class="t" style="left:481.75px;top:921.35px;font-size:14px;line-height:14px;color:#6c6c6c;letter-spacing:0.266px;-webkit-text-stroke:0.65px #6c6c6c;">−1</div>
<div class="t" style="left:554.25px;top:921.85px;font-size:14px;line-height:14px;color:#6c6c6c;letter-spacing:0.156px;font-weight:700;-webkit-text-stroke:0.6px #6c6c6c;">Y</div>
<div class="t" style="left:619.75px;top:921.35px;font-size:14px;line-height:14px;color:#6c6c6c;letter-spacing:0.266px;-webkit-text-stroke:0.65px #6c6c6c;">+1</div>
<div class="t" style="left:717.50px;top:921.35px;font-size:14px;line-height:14px;color:#6c6c6c;letter-spacing:0.417px;-webkit-text-stroke:0.65px #6c6c6c;">+10</div>
<div class="t" style="left:815.75px;top:921.35px;font-size:14px;line-height:14px;color:#6c6c6c;letter-spacing:0.238px;-webkit-text-stroke:0.65px #6c6c6c;">+100</div>
<div class="t" style="left:273.50px;top:957.35px;font-size:14px;line-height:14px;color:#6c6c6c;letter-spacing:0.417px;-webkit-text-stroke:0.65px #6c6c6c;">−25</div>
<div class="t" style="left:379.75px;top:957.35px;font-size:14px;line-height:14px;color:#6c6c6c;letter-spacing:0.266px;-webkit-text-stroke:0.65px #6c6c6c;">−1</div>
<div class="t" style="left:476.00px;top:957.35px;font-size:14px;line-height:14px;color:#6c6c6c;letter-spacing:0.090px;-webkit-text-stroke:0.65px #6c6c6c;">−0.1</div>
<div class="t" style="left:554.50px;top:957.85px;font-size:14px;line-height:14px;color:#6c6c6c;letter-spacing:0.438px;font-weight:700;-webkit-text-stroke:0.6px #6c6c6c;">Z</div>
<div class="t" style="left:614.00px;top:957.35px;font-size:14px;line-height:14px;color:#6c6c6c;letter-spacing:0.090px;-webkit-text-stroke:0.65px #6c6c6c;">+0.1</div>
<div class="t" style="left:721.75px;top:957.35px;font-size:14px;line-height:14px;color:#6c6c6c;letter-spacing:0.266px;-webkit-text-stroke:0.65px #6c6c6c;">+1</div>
<div class="t" style="left:819.50px;top:957.35px;font-size:14px;line-height:14px;color:#6c6c6c;letter-spacing:0.417px;-webkit-text-stroke:0.65px #6c6c6c;">+25</div>
<div class="t" style="left:968.40px;top:184.97px;font-size:20px;line-height:20px;color:#fff;letter-spacing:-0.007px;-webkit-text-stroke:0.25px #fff;">Temperatures</div>
<div class="t" style="left:1671.40px;top:188.15px;font-size:14px;line-height:14px;color:#2e8de0;letter-spacing:0.325px;-webkit-text-stroke:0.4px #2e8de0;">COOLDOWN</div>
<div class="t" style="left:975.80px;top:226.74px;font-size:12px;line-height:12px;color:#bdbdbd;letter-spacing:-0.222px;font-weight:700;">Name</div>
<div class="t" style="left:1584.90px;top:226.74px;font-size:12px;line-height:12px;color:#bdbdbd;letter-spacing:-0.009px;font-weight:700;">State</div>
<div class="t" style="left:1672.70px;top:226.74px;font-size:12px;line-height:12px;color:#bdbdbd;letter-spacing:-0.221px;font-weight:700;">Current</div>
<div class="t" style="left:1746.00px;top:226.74px;font-size:12px;line-height:12px;color:#bdbdbd;letter-spacing:-0.016px;font-weight:700;">Target</div>
<div class="t" style="left:975.80px;top:260.05px;font-size:14px;line-height:14px;color:#fff;letter-spacing:-0.040px;-webkit-text-stroke:0.35px #fff;">Extruder</div>
<div class="t" style="left:975.80px;top:299.05px;font-size:14px;line-height:14px;color:#fff;letter-spacing:-0.113px;-webkit-text-stroke:0.35px #fff;">Heater Bed</div>
<div class="t" style="left:975.80px;top:336.35px;font-size:14px;line-height:14px;color:#fff;letter-spacing:-0.006px;-webkit-text-stroke:0.35px #fff;">Cartographer Coil</div>
<div class="t" style="left:975.80px;top:371.35px;font-size:14px;line-height:14px;color:#fff;letter-spacing:-0.067px;-webkit-text-stroke:0.35px #fff;">H723</div>
<div class="t" style="left:975.80px;top:406.35px;font-size:14px;line-height:14px;color:#fff;letter-spacing:-1.215px;-webkit-text-stroke:0.35px #fff;">SOC</div>
<div class="t" style="left:1584.00px;top:260.05px;font-size:14px;line-height:14px;color:#fff;letter-spacing:-0.430px;-webkit-text-stroke:0.35px #fff;">31 %</div>
<div class="t" style="left:1596.00px;top:299.05px;font-size:14px;line-height:14px;color:#fff;letter-spacing:0.963px;-webkit-text-stroke:0.35px #fff;">off</div>
<div class="t" style="left:1663.80px;top:260.05px;font-size:14px;line-height:14px;color:#fff;letter-spacing:-0.007px;-webkit-text-stroke:0.35px #fff;">220.3°C</div>
<div class="t" style="left:1671.80px;top:299.05px;font-size:14px;line-height:14px;color:#fff;letter-spacing:-0.045px;-webkit-text-stroke:0.35px #fff;">27.1°C</div>
<div class="t" style="left:1671.80px;top:336.35px;font-size:14px;line-height:14px;color:#fff;letter-spacing:-0.045px;-webkit-text-stroke:0.35px #fff;">43.4°C</div>
<div class="t" style="left:1671.80px;top:371.35px;font-size:14px;line-height:14px;color:#fff;letter-spacing:-0.045px;-webkit-text-stroke:0.35px #fff;">48.2°C</div>
<div class="t" style="left:1671.80px;top:406.35px;font-size:14px;line-height:14px;color:#fff;letter-spacing:-0.045px;-webkit-text-stroke:0.35px #fff;">42.8°C</div>
<div class="t" style="left:1753.80px;top:259.16px;font-size:16px;line-height:16px;color:#fff;letter-spacing:0.232px;">220</div>
<div class="t" style="left:1797.50px;top:259.16px;font-size:16px;line-height:16px;color:#fff;letter-spacing:-0.227px;">°C</div>
<div class="t" style="left:1753.80px;top:298.16px;font-size:16px;line-height:16px;color:#fff;letter-spacing:0.294px;">0</div>
<div class="t" style="left:1797.50px;top:298.16px;font-size:16px;line-height:16px;color:#fff;letter-spacing:-0.227px;">°C</div>
<div class="t" style="left:967.90px;top:719.07px;font-size:20px;line-height:20px;color:#fff;letter-spacing:-0.113px;-webkit-text-stroke:0.25px #fff;">Console</div>
<div class="t" style="left:980.70px;top:784.10px;font-size:16px;line-height:16px;color:#bdbdbd;letter-spacing:-0.118px;font-family:'Liberation Mono', monospace;-webkit-text-stroke:0.3px #bdbdbd;">Send code...</div>
<div class="t" style="left:1374.60px;top:841.35px;font-size:14px;line-height:14px;color:#fff;letter-spacing:0.062px;-webkit-text-stroke:0.35px #fff;">Empty</div>
<div class="t" style="left:959.50px;top:450.04px;font-size:12px;line-height:12px;color:#a6a6a6;letter-spacing:0.454px;-webkit-text-stroke:0.2px #a6a6a6;">Temperature [°C]</div>
<div class="t" style="left:932.80px;top:461.14px;font-size:12px;line-height:12px;color:#a0a0a0;letter-spacing:0.456px;-webkit-text-stroke:0.2px #a0a0a0;">360</div>
<div class="t" style="left:932.80px;top:491.98px;font-size:12px;line-height:12px;color:#a0a0a0;letter-spacing:0.456px;-webkit-text-stroke:0.2px #a0a0a0;">300</div>
<div class="t" style="left:932.80px;top:517.67px;font-size:12px;line-height:12px;color:#a0a0a0;letter-spacing:0.456px;-webkit-text-stroke:0.2px #a0a0a0;">250</div>
<div class="t" style="left:932.80px;top:543.36px;font-size:12px;line-height:12px;color:#a0a0a0;letter-spacing:0.456px;-webkit-text-stroke:0.2px #a0a0a0;">200</div>
<div class="t" style="left:933.00px;top:569.06px;font-size:12px;line-height:12px;color:#a0a0a0;letter-spacing:0.390px;-webkit-text-stroke:0.2px #a0a0a0;">150</div>
<div class="t" style="left:933.00px;top:594.75px;font-size:12px;line-height:12px;color:#a0a0a0;letter-spacing:0.390px;-webkit-text-stroke:0.2px #a0a0a0;">100</div>
<div class="t" style="left:939.80px;top:620.45px;font-size:12px;line-height:12px;color:#a0a0a0;letter-spacing:0.520px;-webkit-text-stroke:0.2px #a0a0a0;">50</div>
<div class="t" style="left:946.30px;top:661.84px;font-size:12px;line-height:12px;color:#5f5f5f;letter-spacing:0.194px;">16:32</div>
<div class="t" style="left:1035.73px;top:661.84px;font-size:12px;line-height:12px;color:#5f5f5f;letter-spacing:0.194px;">16:34</div>
<div class="t" style="left:1125.16px;top:661.84px;font-size:12px;line-height:12px;color:#5f5f5f;letter-spacing:0.194px;">16:36</div>
<div class="t" style="left:1214.59px;top:661.84px;font-size:12px;line-height:12px;color:#5f5f5f;letter-spacing:0.194px;">16:38</div>
<div class="t" style="left:1304.02px;top:661.84px;font-size:12px;line-height:12px;color:#5f5f5f;letter-spacing:0.194px;">16:40</div>
<div class="t" style="left:1393.45px;top:661.84px;font-size:12px;line-height:12px;color:#5f5f5f;letter-spacing:0.194px;">16:42</div>
<div class="t" style="left:1482.88px;top:661.84px;font-size:12px;line-height:12px;color:#5f5f5f;letter-spacing:0.194px;">16:44</div>
<div class="t" style="left:1572.31px;top:661.84px;font-size:12px;line-height:12px;color:#5f5f5f;letter-spacing:0.194px;">16:46</div>
<div class="t" style="left:1661.74px;top:661.84px;font-size:12px;line-height:12px;color:#5f5f5f;letter-spacing:0.194px;">16:48</div>
<div class="t" style="left:1751.17px;top:661.84px;font-size:12px;line-height:12px;color:#5f5f5f;letter-spacing:0.194px;">16:50</div>
</div>
</body>
</html>
